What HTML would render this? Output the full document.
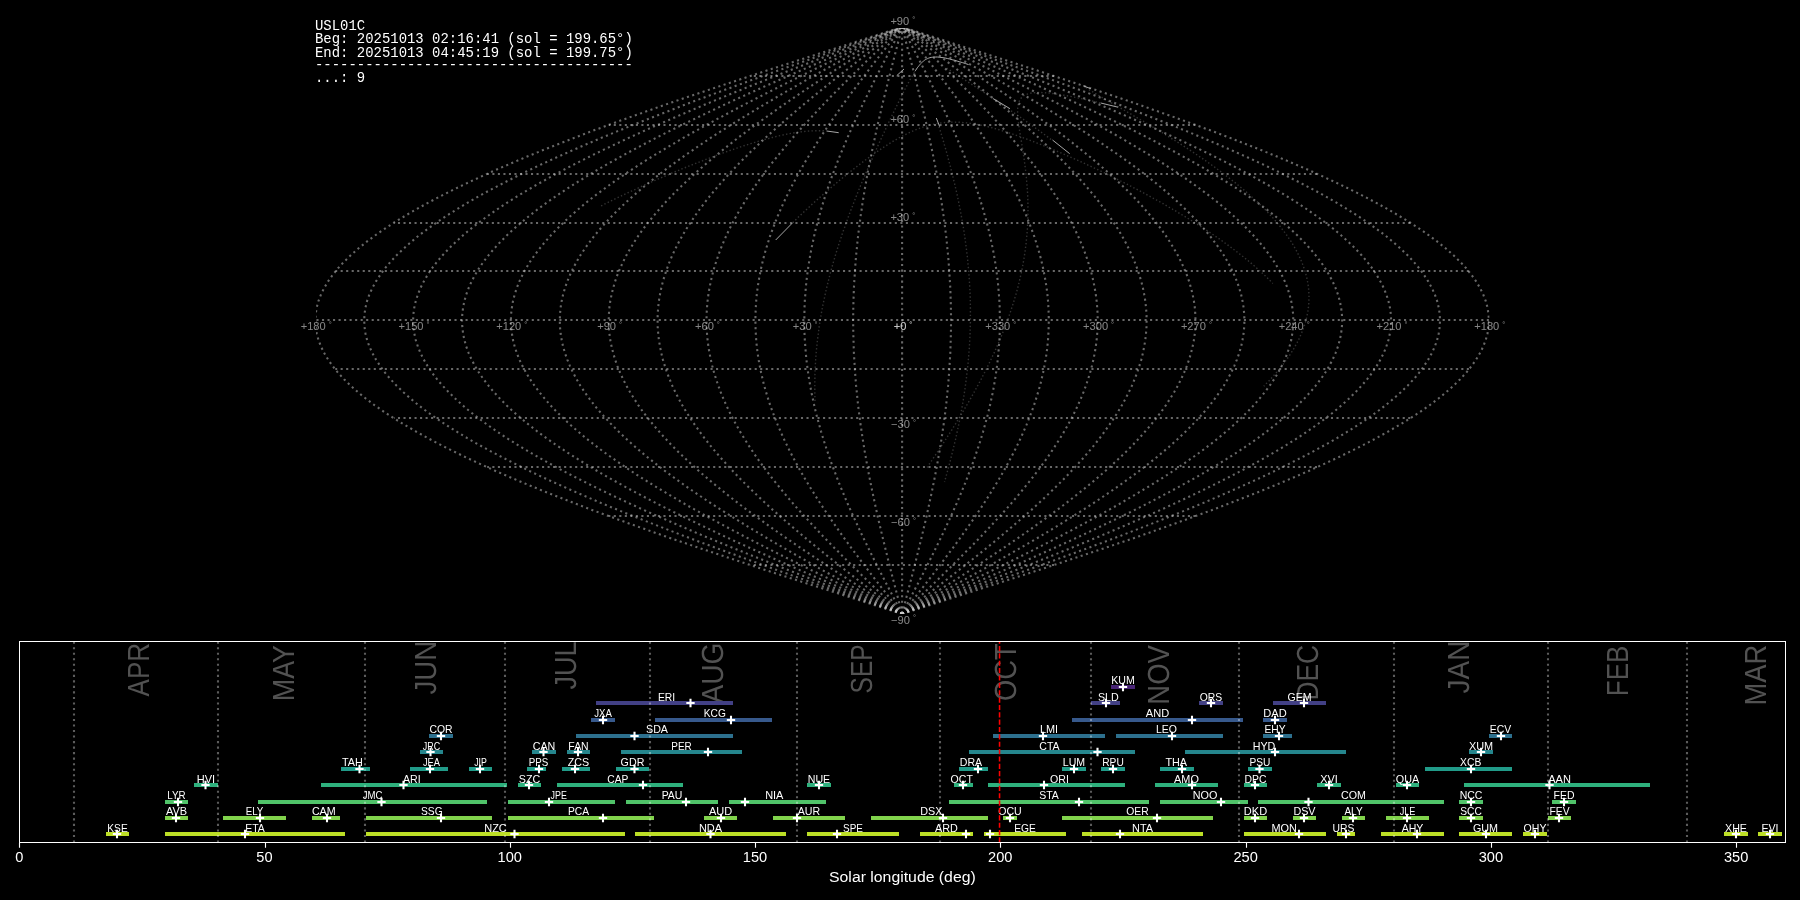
<!DOCTYPE html>
<html><head><meta charset="utf-8"><title>USL01C</title>
<style>html,body{margin:0;padding:0;background:#000;}body{width:1800px;height:900px;overflow:hidden;}svg{display:block;position:absolute;left:0;top:0;will-change:transform;}text{font-family:"Liberation Sans",sans-serif;}.mono{font-family:"Liberation Mono",monospace;}</style></head><body>
<svg width="1800" height="900" viewBox="0 0 1800 900">
<clipPath id="mapclip"><rect x="316" y="28" width="1173.5" height="586"/></clipPath>
<g fill="none" stroke="#cfcfcf" stroke-opacity="0.5" stroke-width="2.083" stroke-dasharray="2.083 3.4375" clip-path="url(#mapclip)">
<polyline points="902.1,613.9 922.6,607.4 943.0,600.9 963.4,594.3 983.8,587.8 1004.0,581.3 1024.1,574.8 1044.1,568.3 1063.8,561.7 1083.4,555.2 1102.8,548.7 1121.9,542.2 1140.8,535.7 1159.3,529.1 1177.6,522.6 1195.5,516.1 1213.1,509.6 1230.2,503.1 1247.0,496.5 1263.4,490.0 1279.3,483.5 1294.7,477.0 1309.7,470.5 1324.2,463.9 1338.2,457.4 1351.6,450.9 1364.5,444.4 1376.8,437.9 1388.6,431.3 1399.7,424.8 1410.3,418.3 1420.2,411.8 1429.5,405.3 1438.2,398.7 1446.2,392.2 1453.5,385.7 1460.2,379.2 1466.2,372.7 1471.5,366.1 1476.1,359.6 1480.0,353.1 1483.2,346.6 1485.7,340.1 1487.5,333.5 1488.5,327.0 1488.9,320.5 1488.5,314.0 1487.5,307.5 1485.7,300.9 1483.2,294.4 1480.0,287.9 1476.1,281.4 1471.5,274.9 1466.2,268.3 1460.2,261.8 1453.5,255.3 1446.2,248.8 1438.2,242.3 1429.5,235.7 1420.2,229.2 1410.3,222.7 1399.7,216.2 1388.6,209.7 1376.8,203.1 1364.5,196.6 1351.6,190.1 1338.2,183.6 1324.2,177.1 1309.7,170.5 1294.7,164.0 1279.3,157.5 1263.4,151.0 1247.0,144.5 1230.2,137.9 1213.1,131.4 1195.5,124.9 1177.6,118.4 1159.3,111.9 1140.8,105.3 1121.9,98.8 1102.8,92.3 1083.4,85.8 1063.8,79.3 1044.1,72.7 1024.1,66.2 1004.0,59.7 983.8,53.2 963.4,46.7 943.0,40.1 922.6,33.6 902.1,27.1"/>
<polyline points="902.1,613.9 920.9,607.4 939.6,600.9 958.3,594.3 977.0,587.8 995.5,581.3 1013.9,574.8 1032.2,568.3 1050.4,561.7 1068.3,555.2 1086.1,548.7 1103.6,542.2 1120.9,535.7 1137.9,529.1 1154.6,522.6 1171.1,516.1 1187.1,509.6 1202.9,503.1 1218.3,496.5 1233.3,490.0 1247.9,483.5 1262.0,477.0 1275.8,470.5 1289.0,463.9 1301.8,457.4 1314.2,450.9 1326.0,444.4 1337.3,437.9 1348.0,431.3 1358.3,424.8 1367.9,418.3 1377.0,411.8 1385.6,405.3 1393.5,398.7 1400.8,392.2 1407.6,385.7 1413.7,379.2 1419.2,372.7 1424.0,366.1 1428.2,359.6 1431.8,353.1 1434.8,346.6 1437.1,340.1 1438.7,333.5 1439.7,327.0 1440.0,320.5 1439.7,314.0 1438.7,307.5 1437.1,300.9 1434.8,294.4 1431.8,287.9 1428.2,281.4 1424.0,274.9 1419.2,268.3 1413.7,261.8 1407.6,255.3 1400.8,248.8 1393.5,242.3 1385.6,235.7 1377.0,229.2 1367.9,222.7 1358.3,216.2 1348.0,209.7 1337.3,203.1 1326.0,196.6 1314.2,190.1 1301.8,183.6 1289.0,177.1 1275.8,170.5 1262.0,164.0 1247.9,157.5 1233.3,151.0 1218.3,144.5 1202.9,137.9 1187.1,131.4 1171.1,124.9 1154.6,118.4 1137.9,111.9 1120.9,105.3 1103.6,98.8 1086.1,92.3 1068.3,85.8 1050.4,79.3 1032.2,72.7 1013.9,66.2 995.5,59.7 977.0,53.2 958.3,46.7 939.6,40.1 920.9,33.6 902.1,27.1"/>
<polyline points="902.1,613.9 919.2,607.4 936.2,600.9 953.2,594.3 970.2,587.8 987.0,581.3 1003.8,574.8 1020.4,568.3 1036.9,561.7 1053.2,555.2 1069.3,548.7 1085.3,542.2 1101.0,535.7 1116.5,529.1 1131.7,522.6 1146.6,516.1 1161.2,509.6 1175.5,503.1 1189.5,496.5 1203.2,490.0 1216.4,483.5 1229.3,477.0 1241.8,470.5 1253.9,463.9 1265.5,457.4 1276.7,450.9 1287.4,444.4 1297.7,437.9 1307.5,431.3 1316.8,424.8 1325.6,418.3 1333.9,411.8 1341.6,405.3 1348.8,398.7 1355.5,392.2 1361.6,385.7 1367.2,379.2 1372.2,372.7 1376.6,366.1 1380.4,359.6 1383.7,353.1 1386.3,346.6 1388.4,340.1 1389.9,333.5 1390.8,327.0 1391.1,320.5 1390.8,314.0 1389.9,307.5 1388.4,300.9 1386.3,294.4 1383.7,287.9 1380.4,281.4 1376.6,274.9 1372.2,268.3 1367.2,261.8 1361.6,255.3 1355.5,248.8 1348.8,242.3 1341.6,235.7 1333.9,229.2 1325.6,222.7 1316.8,216.2 1307.5,209.7 1297.7,203.1 1287.4,196.6 1276.7,190.1 1265.5,183.6 1253.9,177.1 1241.8,170.5 1229.3,164.0 1216.4,157.5 1203.2,151.0 1189.5,144.5 1175.5,137.9 1161.2,131.4 1146.6,124.9 1131.7,118.4 1116.5,111.9 1101.0,105.3 1085.3,98.8 1069.3,92.3 1053.2,85.8 1036.9,79.3 1020.4,72.7 1003.8,66.2 987.0,59.7 970.2,53.2 953.2,46.7 936.2,40.1 919.2,33.6 902.1,27.1"/>
<polyline points="902.1,613.9 917.5,607.4 932.8,600.9 948.1,594.3 963.4,587.8 978.5,581.3 993.6,574.8 1008.6,568.3 1023.4,561.7 1038.1,555.2 1052.6,548.7 1067.0,542.2 1081.1,535.7 1095.0,529.1 1108.7,522.6 1122.2,516.1 1135.3,509.6 1148.2,503.1 1160.8,496.5 1173.1,490.0 1185.0,483.5 1196.6,477.0 1207.8,470.5 1218.7,463.9 1229.2,457.4 1239.2,450.9 1248.9,444.4 1258.1,437.9 1267.0,431.3 1275.3,424.8 1283.2,418.3 1290.7,411.8 1297.7,405.3 1304.2,398.7 1310.2,392.2 1315.7,385.7 1320.7,379.2 1325.2,372.7 1329.1,366.1 1332.6,359.6 1335.5,353.1 1337.9,346.6 1339.8,340.1 1341.1,333.5 1341.9,327.0 1342.2,320.5 1341.9,314.0 1341.1,307.5 1339.8,300.9 1337.9,294.4 1335.5,287.9 1332.6,281.4 1329.1,274.9 1325.2,268.3 1320.7,261.8 1315.7,255.3 1310.2,248.8 1304.2,242.3 1297.7,235.7 1290.7,229.2 1283.2,222.7 1275.3,216.2 1267.0,209.7 1258.1,203.1 1248.9,196.6 1239.2,190.1 1229.2,183.6 1218.7,177.1 1207.8,170.5 1196.6,164.0 1185.0,157.5 1173.1,151.0 1160.8,144.5 1148.2,137.9 1135.3,131.4 1122.2,124.9 1108.7,118.4 1095.0,111.9 1081.1,105.3 1067.0,98.8 1052.6,92.3 1038.1,85.8 1023.4,79.3 1008.6,72.7 993.6,66.2 978.5,59.7 963.4,53.2 948.1,46.7 932.8,40.1 917.5,33.6 902.1,27.1"/>
<polyline points="902.1,613.9 915.8,607.4 929.4,600.9 943.0,594.3 956.5,587.8 970.0,581.3 983.4,574.8 996.7,568.3 1009.9,561.7 1023.0,555.2 1035.9,548.7 1048.6,542.2 1061.2,535.7 1073.6,529.1 1085.8,522.6 1097.7,516.1 1109.4,509.6 1120.9,503.1 1132.0,496.5 1142.9,490.0 1153.6,483.5 1163.9,477.0 1173.9,470.5 1183.5,463.9 1192.8,457.4 1201.8,450.9 1210.4,444.4 1218.6,437.9 1226.4,431.3 1233.9,424.8 1240.9,418.3 1247.5,411.8 1253.7,405.3 1259.5,398.7 1264.8,392.2 1269.7,385.7 1274.2,379.2 1278.1,372.7 1281.7,366.1 1284.8,359.6 1287.4,353.1 1289.5,346.6 1291.2,340.1 1292.3,333.5 1293.1,327.0 1293.3,320.5 1293.1,314.0 1292.3,307.5 1291.2,300.9 1289.5,294.4 1287.4,287.9 1284.8,281.4 1281.7,274.9 1278.1,268.3 1274.2,261.8 1269.7,255.3 1264.8,248.8 1259.5,242.3 1253.7,235.7 1247.5,229.2 1240.9,222.7 1233.9,216.2 1226.4,209.7 1218.6,203.1 1210.4,196.6 1201.8,190.1 1192.8,183.6 1183.5,177.1 1173.9,170.5 1163.9,164.0 1153.6,157.5 1142.9,151.0 1132.0,144.5 1120.9,137.9 1109.4,131.4 1097.7,124.9 1085.8,118.4 1073.6,111.9 1061.2,105.3 1048.6,98.8 1035.9,92.3 1023.0,85.8 1009.9,79.3 996.7,72.7 983.4,66.2 970.0,59.7 956.5,53.2 943.0,46.7 929.4,40.1 915.8,33.6 902.1,27.1"/>
<polyline points="902.1,613.9 914.0,607.4 926.0,600.9 937.9,594.3 949.7,587.8 961.5,581.3 973.3,574.8 984.9,568.3 996.5,561.7 1007.9,555.2 1019.2,548.7 1030.3,542.2 1041.3,535.7 1052.2,529.1 1062.8,522.6 1073.2,516.1 1083.5,509.6 1093.5,503.1 1103.3,496.5 1112.8,490.0 1122.1,483.5 1131.1,477.0 1139.9,470.5 1148.3,463.9 1156.5,457.4 1164.3,450.9 1171.8,444.4 1179.0,437.9 1185.9,431.3 1192.4,424.8 1198.5,418.3 1204.3,411.8 1209.8,405.3 1214.8,398.7 1219.5,392.2 1223.8,385.7 1227.6,379.2 1231.1,372.7 1234.2,366.1 1236.9,359.6 1239.2,353.1 1241.1,346.6 1242.5,340.1 1243.6,333.5 1244.2,327.0 1244.4,320.5 1244.2,314.0 1243.6,307.5 1242.5,300.9 1241.1,294.4 1239.2,287.9 1236.9,281.4 1234.2,274.9 1231.1,268.3 1227.6,261.8 1223.8,255.3 1219.5,248.8 1214.8,242.3 1209.8,235.7 1204.3,229.2 1198.5,222.7 1192.4,216.2 1185.9,209.7 1179.0,203.1 1171.8,196.6 1164.3,190.1 1156.5,183.6 1148.3,177.1 1139.9,170.5 1131.1,164.0 1122.1,157.5 1112.8,151.0 1103.3,144.5 1093.5,137.9 1083.5,131.4 1073.2,124.9 1062.8,118.4 1052.2,111.9 1041.3,105.3 1030.3,98.8 1019.2,92.3 1007.9,85.8 996.5,79.3 984.9,72.7 973.3,66.2 961.5,59.7 949.7,53.2 937.9,46.7 926.0,40.1 914.0,33.6 902.1,27.1"/>
<polyline points="902.1,613.9 912.3,607.4 922.6,600.9 932.8,594.3 942.9,587.8 953.0,581.3 963.1,574.8 973.1,568.3 983.0,561.7 992.8,555.2 1002.4,548.7 1012.0,542.2 1021.4,535.7 1030.7,529.1 1039.8,522.6 1048.8,516.1 1057.6,509.6 1066.2,503.1 1074.6,496.5 1082.7,490.0 1090.7,483.5 1098.4,477.0 1105.9,470.5 1113.2,463.9 1120.1,457.4 1126.9,450.9 1133.3,444.4 1139.5,437.9 1145.3,431.3 1150.9,424.8 1156.2,418.3 1161.2,411.8 1165.8,405.3 1170.1,398.7 1174.1,392.2 1177.8,385.7 1181.1,379.2 1184.1,372.7 1186.8,366.1 1189.1,359.6 1191.0,353.1 1192.6,346.6 1193.9,340.1 1194.8,333.5 1195.3,327.0 1195.5,320.5 1195.3,314.0 1194.8,307.5 1193.9,300.9 1192.6,294.4 1191.0,287.9 1189.1,281.4 1186.8,274.9 1184.1,268.3 1181.1,261.8 1177.8,255.3 1174.1,248.8 1170.1,242.3 1165.8,235.7 1161.2,229.2 1156.2,222.7 1150.9,216.2 1145.3,209.7 1139.5,203.1 1133.3,196.6 1126.9,190.1 1120.1,183.6 1113.2,177.1 1105.9,170.5 1098.4,164.0 1090.7,157.5 1082.7,151.0 1074.6,144.5 1066.2,137.9 1057.6,131.4 1048.8,124.9 1039.8,118.4 1030.7,111.9 1021.4,105.3 1012.0,98.8 1002.4,92.3 992.8,85.8 983.0,79.3 973.1,72.7 963.1,66.2 953.0,59.7 942.9,53.2 932.8,46.7 922.6,40.1 912.3,33.6 902.1,27.1"/>
<polyline points="902.1,613.9 910.6,607.4 919.2,600.9 927.7,594.3 936.1,587.8 944.6,581.3 952.9,574.8 961.2,568.3 969.5,561.7 977.7,555.2 985.7,548.7 993.7,542.2 1001.5,535.7 1009.3,529.1 1016.9,522.6 1024.4,516.1 1031.7,509.6 1038.8,503.1 1045.8,496.5 1052.6,490.0 1059.3,483.5 1065.7,477.0 1071.9,470.5 1078.0,463.9 1083.8,457.4 1089.4,450.9 1094.8,444.4 1099.9,437.9 1104.8,431.3 1109.4,424.8 1113.8,418.3 1118.0,411.8 1121.9,405.3 1125.5,398.7 1128.8,392.2 1131.9,385.7 1134.6,379.2 1137.1,372.7 1139.3,366.1 1141.3,359.6 1142.9,353.1 1144.2,346.6 1145.3,340.1 1146.0,333.5 1146.5,327.0 1146.6,320.5 1146.5,314.0 1146.0,307.5 1145.3,300.9 1144.2,294.4 1142.9,287.9 1141.3,281.4 1139.3,274.9 1137.1,268.3 1134.6,261.8 1131.9,255.3 1128.8,248.8 1125.5,242.3 1121.9,235.7 1118.0,229.2 1113.8,222.7 1109.4,216.2 1104.8,209.7 1099.9,203.1 1094.8,196.6 1089.4,190.1 1083.8,183.6 1078.0,177.1 1071.9,170.5 1065.7,164.0 1059.3,157.5 1052.6,151.0 1045.8,144.5 1038.8,137.9 1031.7,131.4 1024.4,124.9 1016.9,118.4 1009.3,111.9 1001.5,105.3 993.7,98.8 985.7,92.3 977.7,85.8 969.5,79.3 961.2,72.7 952.9,66.2 944.6,59.7 936.1,53.2 927.7,46.7 919.2,40.1 910.6,33.6 902.1,27.1"/>
<polyline points="902.1,613.9 908.9,607.4 915.7,600.9 922.5,594.3 929.3,587.8 936.1,581.3 942.8,574.8 949.4,568.3 956.0,561.7 962.5,555.2 969.0,548.7 975.4,542.2 981.7,535.7 987.8,529.1 993.9,522.6 999.9,516.1 1005.8,509.6 1011.5,503.1 1017.1,496.5 1022.5,490.0 1027.8,483.5 1033.0,477.0 1038.0,470.5 1042.8,463.9 1047.5,457.4 1051.9,450.9 1056.2,444.4 1060.3,437.9 1064.3,431.3 1068.0,424.8 1071.5,418.3 1074.8,411.8 1077.9,405.3 1080.8,398.7 1083.5,392.2 1085.9,385.7 1088.1,379.2 1090.1,372.7 1091.9,366.1 1093.4,359.6 1094.7,353.1 1095.8,346.6 1096.6,340.1 1097.2,333.5 1097.6,327.0 1097.7,320.5 1097.6,314.0 1097.2,307.5 1096.6,300.9 1095.8,294.4 1094.7,287.9 1093.4,281.4 1091.9,274.9 1090.1,268.3 1088.1,261.8 1085.9,255.3 1083.5,248.8 1080.8,242.3 1077.9,235.7 1074.8,229.2 1071.5,222.7 1068.0,216.2 1064.3,209.7 1060.3,203.1 1056.2,196.6 1051.9,190.1 1047.5,183.6 1042.8,177.1 1038.0,170.5 1033.0,164.0 1027.8,157.5 1022.5,151.0 1017.1,144.5 1011.5,137.9 1005.8,131.4 999.9,124.9 993.9,118.4 987.8,111.9 981.7,105.3 975.4,98.8 969.0,92.3 962.5,85.8 956.0,79.3 949.4,72.7 942.8,66.2 936.1,59.7 929.3,53.2 922.5,46.7 915.7,40.1 908.9,33.6 902.1,27.1"/>
<polyline points="902.1,613.9 907.2,607.4 912.3,600.9 917.4,594.3 922.5,587.8 927.6,581.3 932.6,574.8 937.6,568.3 942.5,561.7 947.4,555.2 952.3,548.7 957.1,542.2 961.8,535.7 966.4,529.1 971.0,522.6 975.5,516.1 979.8,509.6 984.1,503.1 988.3,496.5 992.4,490.0 996.4,483.5 1000.3,477.0 1004.0,470.5 1007.6,463.9 1011.1,457.4 1014.5,450.9 1017.7,444.4 1020.8,437.9 1023.7,431.3 1026.5,424.8 1029.1,418.3 1031.6,411.8 1034.0,405.3 1036.1,398.7 1038.1,392.2 1040.0,385.7 1041.6,379.2 1043.1,372.7 1044.4,366.1 1045.6,359.6 1046.6,353.1 1047.4,346.6 1048.0,340.1 1048.4,333.5 1048.7,327.0 1048.8,320.5 1048.7,314.0 1048.4,307.5 1048.0,300.9 1047.4,294.4 1046.6,287.9 1045.6,281.4 1044.4,274.9 1043.1,268.3 1041.6,261.8 1040.0,255.3 1038.1,248.8 1036.1,242.3 1034.0,235.7 1031.6,229.2 1029.1,222.7 1026.5,216.2 1023.7,209.7 1020.8,203.1 1017.7,196.6 1014.5,190.1 1011.1,183.6 1007.6,177.1 1004.0,170.5 1000.3,164.0 996.4,157.5 992.4,151.0 988.3,144.5 984.1,137.9 979.8,131.4 975.5,124.9 971.0,118.4 966.4,111.9 961.8,105.3 957.1,98.8 952.3,92.3 947.4,85.8 942.5,79.3 937.6,72.7 932.6,66.2 927.6,59.7 922.5,53.2 917.4,46.7 912.3,40.1 907.2,33.6 902.1,27.1"/>
<polyline points="902.1,613.9 905.5,607.4 908.9,600.9 912.3,594.3 915.7,587.8 919.1,581.3 922.4,574.8 925.8,568.3 929.1,561.7 932.3,555.2 935.5,548.7 938.7,542.2 941.9,535.7 945.0,529.1 948.0,522.6 951.0,516.1 953.9,509.6 956.8,503.1 959.6,496.5 962.3,490.0 965.0,483.5 967.5,477.0 970.0,470.5 972.5,463.9 974.8,457.4 977.0,450.9 979.2,444.4 981.2,437.9 983.2,431.3 985.0,424.8 986.8,418.3 988.5,411.8 990.0,405.3 991.4,398.7 992.8,392.2 994.0,385.7 995.1,379.2 996.1,372.7 997.0,366.1 997.8,359.6 998.4,353.1 998.9,346.6 999.4,340.1 999.7,333.5 999.8,327.0 999.9,320.5 999.8,314.0 999.7,307.5 999.4,300.9 998.9,294.4 998.4,287.9 997.8,281.4 997.0,274.9 996.1,268.3 995.1,261.8 994.0,255.3 992.8,248.8 991.4,242.3 990.0,235.7 988.5,229.2 986.8,222.7 985.0,216.2 983.2,209.7 981.2,203.1 979.2,196.6 977.0,190.1 974.8,183.6 972.5,177.1 970.0,170.5 967.5,164.0 965.0,157.5 962.3,151.0 959.6,144.5 956.8,137.9 953.9,131.4 951.0,124.9 948.0,118.4 945.0,111.9 941.9,105.3 938.7,98.8 935.5,92.3 932.3,85.8 929.1,79.3 925.8,72.7 922.4,66.2 919.1,59.7 915.7,53.2 912.3,46.7 908.9,40.1 905.5,33.6 902.1,27.1"/>
<polyline points="902.1,613.9 903.8,607.4 905.5,600.9 907.2,594.3 908.9,587.8 910.6,581.3 912.3,574.8 913.9,568.3 915.6,561.7 917.2,555.2 918.8,548.7 920.4,542.2 922.0,535.7 923.5,529.1 925.1,522.6 926.6,516.1 928.0,509.6 929.4,503.1 930.8,496.5 932.2,490.0 933.5,483.5 934.8,477.0 936.1,470.5 937.3,463.9 938.4,457.4 939.6,450.9 940.6,444.4 941.7,437.9 942.6,431.3 943.6,424.8 944.4,418.3 945.3,411.8 946.1,405.3 946.8,398.7 947.4,392.2 948.1,385.7 948.6,379.2 949.1,372.7 949.5,366.1 949.9,359.6 950.3,353.1 950.5,346.6 950.7,340.1 950.9,333.5 951.0,327.0 951.0,320.5 951.0,314.0 950.9,307.5 950.7,300.9 950.5,294.4 950.3,287.9 949.9,281.4 949.5,274.9 949.1,268.3 948.6,261.8 948.1,255.3 947.4,248.8 946.8,242.3 946.1,235.7 945.3,229.2 944.4,222.7 943.6,216.2 942.6,209.7 941.7,203.1 940.6,196.6 939.6,190.1 938.4,183.6 937.3,177.1 936.1,170.5 934.8,164.0 933.5,157.5 932.2,151.0 930.8,144.5 929.4,137.9 928.0,131.4 926.6,124.9 925.1,118.4 923.5,111.9 922.0,105.3 920.4,98.8 918.8,92.3 917.2,85.8 915.6,79.3 913.9,72.7 912.3,66.2 910.6,59.7 908.9,53.2 907.2,46.7 905.5,40.1 903.8,33.6 902.1,27.1"/>
<polyline points="902.1,613.9 902.1,607.4 902.1,600.9 902.1,594.3 902.1,587.8 902.1,581.3 902.1,574.8 902.1,568.3 902.1,561.7 902.1,555.2 902.1,548.7 902.1,542.2 902.1,535.7 902.1,529.1 902.1,522.6 902.1,516.1 902.1,509.6 902.1,503.1 902.1,496.5 902.1,490.0 902.1,483.5 902.1,477.0 902.1,470.5 902.1,463.9 902.1,457.4 902.1,450.9 902.1,444.4 902.1,437.9 902.1,431.3 902.1,424.8 902.1,418.3 902.1,411.8 902.1,405.3 902.1,398.7 902.1,392.2 902.1,385.7 902.1,379.2 902.1,372.7 902.1,366.1 902.1,359.6 902.1,353.1 902.1,346.6 902.1,340.1 902.1,333.5 902.1,327.0 902.1,320.5 902.1,314.0 902.1,307.5 902.1,300.9 902.1,294.4 902.1,287.9 902.1,281.4 902.1,274.9 902.1,268.3 902.1,261.8 902.1,255.3 902.1,248.8 902.1,242.3 902.1,235.7 902.1,229.2 902.1,222.7 902.1,216.2 902.1,209.7 902.1,203.1 902.1,196.6 902.1,190.1 902.1,183.6 902.1,177.1 902.1,170.5 902.1,164.0 902.1,157.5 902.1,151.0 902.1,144.5 902.1,137.9 902.1,131.4 902.1,124.9 902.1,118.4 902.1,111.9 902.1,105.3 902.1,98.8 902.1,92.3 902.1,85.8 902.1,79.3 902.1,72.7 902.1,66.2 902.1,59.7 902.1,53.2 902.1,46.7 902.1,40.1 902.1,33.6 902.1,27.1"/>
<polyline points="902.1,613.9 900.4,607.4 898.7,600.9 897.0,594.3 895.3,587.8 893.6,581.3 891.9,574.8 890.3,568.3 888.6,561.7 887.0,555.2 885.4,548.7 883.8,542.2 882.2,535.7 880.7,529.1 879.1,522.6 877.6,516.1 876.2,509.6 874.8,503.1 873.4,496.5 872.0,490.0 870.7,483.5 869.4,477.0 868.1,470.5 866.9,463.9 865.8,457.4 864.6,450.9 863.6,444.4 862.5,437.9 861.6,431.3 860.6,424.8 859.8,418.3 858.9,411.8 858.1,405.3 857.4,398.7 856.8,392.2 856.1,385.7 855.6,379.2 855.1,372.7 854.7,366.1 854.3,359.6 853.9,353.1 853.7,346.6 853.5,340.1 853.3,333.5 853.2,327.0 853.2,320.5 853.2,314.0 853.3,307.5 853.5,300.9 853.7,294.4 853.9,287.9 854.3,281.4 854.7,274.9 855.1,268.3 855.6,261.8 856.1,255.3 856.8,248.8 857.4,242.3 858.1,235.7 858.9,229.2 859.8,222.7 860.6,216.2 861.6,209.7 862.5,203.1 863.6,196.6 864.6,190.1 865.8,183.6 866.9,177.1 868.1,170.5 869.4,164.0 870.7,157.5 872.0,151.0 873.4,144.5 874.8,137.9 876.2,131.4 877.6,124.9 879.1,118.4 880.7,111.9 882.2,105.3 883.8,98.8 885.4,92.3 887.0,85.8 888.6,79.3 890.3,72.7 891.9,66.2 893.6,59.7 895.3,53.2 897.0,46.7 898.7,40.1 900.4,33.6 902.1,27.1"/>
<polyline points="902.1,613.9 898.7,607.4 895.3,600.9 891.9,594.3 888.5,587.8 885.1,581.3 881.8,574.8 878.4,568.3 875.1,561.7 871.9,555.2 868.7,548.7 865.5,542.2 862.3,535.7 859.2,529.1 856.2,522.6 853.2,516.1 850.3,509.6 847.4,503.1 844.6,496.5 841.9,490.0 839.2,483.5 836.7,477.0 834.2,470.5 831.7,463.9 829.4,457.4 827.2,450.9 825.0,444.4 823.0,437.9 821.0,431.3 819.2,424.8 817.4,418.3 815.7,411.8 814.2,405.3 812.8,398.7 811.4,392.2 810.2,385.7 809.1,379.2 808.1,372.7 807.2,366.1 806.4,359.6 805.8,353.1 805.3,346.6 804.8,340.1 804.5,333.5 804.4,327.0 804.3,320.5 804.4,314.0 804.5,307.5 804.8,300.9 805.3,294.4 805.8,287.9 806.4,281.4 807.2,274.9 808.1,268.3 809.1,261.8 810.2,255.3 811.4,248.8 812.8,242.3 814.2,235.7 815.7,229.2 817.4,222.7 819.2,216.2 821.0,209.7 823.0,203.1 825.0,196.6 827.2,190.1 829.4,183.6 831.7,177.1 834.2,170.5 836.7,164.0 839.2,157.5 841.9,151.0 844.6,144.5 847.4,137.9 850.3,131.4 853.2,124.9 856.2,118.4 859.2,111.9 862.3,105.3 865.5,98.8 868.7,92.3 871.9,85.8 875.1,79.3 878.4,72.7 881.8,66.2 885.1,59.7 888.5,53.2 891.9,46.7 895.3,40.1 898.7,33.6 902.1,27.1"/>
<polyline points="902.1,613.9 897.0,607.4 891.9,600.9 886.8,594.3 881.7,587.8 876.6,581.3 871.6,574.8 866.6,568.3 861.7,561.7 856.8,555.2 851.9,548.7 847.1,542.2 842.4,535.7 837.8,529.1 833.2,522.6 828.8,516.1 824.4,509.6 820.1,503.1 815.9,496.5 811.8,490.0 807.8,483.5 803.9,477.0 800.2,470.5 796.6,463.9 793.1,457.4 789.7,450.9 786.5,444.4 783.4,437.9 780.5,431.3 777.7,424.8 775.1,418.3 772.6,411.8 770.2,405.3 768.1,398.7 766.1,392.2 764.2,385.7 762.6,379.2 761.1,372.7 759.8,366.1 758.6,359.6 757.6,353.1 756.8,346.6 756.2,340.1 755.8,333.5 755.5,327.0 755.4,320.5 755.5,314.0 755.8,307.5 756.2,300.9 756.8,294.4 757.6,287.9 758.6,281.4 759.8,274.9 761.1,268.3 762.6,261.8 764.2,255.3 766.1,248.8 768.1,242.3 770.2,235.7 772.6,229.2 775.1,222.7 777.7,216.2 780.5,209.7 783.4,203.1 786.5,196.6 789.7,190.1 793.1,183.6 796.6,177.1 800.2,170.5 803.9,164.0 807.8,157.5 811.8,151.0 815.9,144.5 820.1,137.9 824.4,131.4 828.8,124.9 833.2,118.4 837.8,111.9 842.4,105.3 847.1,98.8 851.9,92.3 856.8,85.8 861.7,79.3 866.6,72.7 871.6,66.2 876.6,59.7 881.7,53.2 886.8,46.7 891.9,40.1 897.0,33.6 902.1,27.1"/>
<polyline points="902.1,613.9 895.3,607.4 888.5,600.9 881.7,594.3 874.9,587.8 868.1,581.3 861.4,574.8 854.8,568.3 848.2,561.7 841.7,555.2 835.2,548.7 828.8,542.2 822.5,535.7 816.4,529.1 810.3,522.6 804.3,516.1 798.4,509.6 792.7,503.1 787.1,496.5 781.7,490.0 776.4,483.5 771.2,477.0 766.2,470.5 761.4,463.9 756.7,457.4 752.3,450.9 748.0,444.4 743.9,437.9 739.9,431.3 736.2,424.8 732.7,418.3 729.4,411.8 726.3,405.3 723.4,398.7 720.7,392.2 718.3,385.7 716.1,379.2 714.1,372.7 712.3,366.1 710.8,359.6 709.5,353.1 708.4,346.6 707.6,340.1 707.0,333.5 706.6,327.0 706.5,320.5 706.6,314.0 707.0,307.5 707.6,300.9 708.4,294.4 709.5,287.9 710.8,281.4 712.3,274.9 714.1,268.3 716.1,261.8 718.3,255.3 720.7,248.8 723.4,242.3 726.3,235.7 729.4,229.2 732.7,222.7 736.2,216.2 739.9,209.7 743.9,203.1 748.0,196.6 752.3,190.1 756.7,183.6 761.4,177.1 766.2,170.5 771.2,164.0 776.4,157.5 781.7,151.0 787.1,144.5 792.7,137.9 798.4,131.4 804.3,124.9 810.3,118.4 816.4,111.9 822.5,105.3 828.8,98.8 835.2,92.3 841.7,85.8 848.2,79.3 854.8,72.7 861.4,66.2 868.1,59.7 874.9,53.2 881.7,46.7 888.5,40.1 895.3,33.6 902.1,27.1"/>
<polyline points="902.1,613.9 893.6,607.4 885.0,600.9 876.5,594.3 868.1,587.8 859.6,581.3 851.3,574.8 843.0,568.3 834.7,561.7 826.5,555.2 818.5,548.7 810.5,542.2 802.7,535.7 794.9,529.1 787.3,522.6 779.9,516.1 772.5,509.6 765.4,503.1 758.4,496.5 751.6,490.0 744.9,483.5 738.5,477.0 732.3,470.5 726.2,463.9 720.4,457.4 714.8,450.9 709.4,444.4 704.3,437.9 699.4,431.3 694.8,424.8 690.4,418.3 686.2,411.8 682.3,405.3 678.7,398.7 675.4,392.2 672.3,385.7 669.6,379.2 667.1,372.7 664.9,366.1 662.9,359.6 661.3,353.1 660.0,346.6 658.9,340.1 658.2,333.5 657.7,327.0 657.6,320.5 657.7,314.0 658.2,307.5 658.9,300.9 660.0,294.4 661.3,287.9 662.9,281.4 664.9,274.9 667.1,268.3 669.6,261.8 672.3,255.3 675.4,248.8 678.7,242.3 682.3,235.7 686.2,229.2 690.4,222.7 694.8,216.2 699.4,209.7 704.3,203.1 709.4,196.6 714.8,190.1 720.4,183.6 726.2,177.1 732.3,170.5 738.5,164.0 744.9,157.5 751.6,151.0 758.4,144.5 765.4,137.9 772.5,131.4 779.9,124.9 787.3,118.4 794.9,111.9 802.7,105.3 810.5,98.8 818.5,92.3 826.5,85.8 834.7,79.3 843.0,72.7 851.3,66.2 859.6,59.7 868.1,53.2 876.5,46.7 885.0,40.1 893.6,33.6 902.1,27.1"/>
<polyline points="902.1,613.9 891.9,607.4 881.6,600.9 871.4,594.3 861.3,587.8 851.2,581.3 841.1,574.8 831.1,568.3 821.2,561.7 811.4,555.2 801.8,548.7 792.2,542.2 782.8,535.7 773.5,529.1 764.4,522.6 755.4,516.1 746.6,509.6 738.0,503.1 729.6,496.5 721.5,490.0 713.5,483.5 705.8,477.0 698.3,470.5 691.0,463.9 684.1,457.4 677.3,450.9 670.9,444.4 664.7,437.9 658.9,431.3 653.3,424.8 648.0,418.3 643.0,411.8 638.4,405.3 634.1,398.7 630.1,392.2 626.4,385.7 623.1,379.2 620.1,372.7 617.4,366.1 615.1,359.6 613.2,353.1 611.6,346.6 610.3,340.1 609.4,333.5 608.9,327.0 608.7,320.5 608.9,314.0 609.4,307.5 610.3,300.9 611.6,294.4 613.2,287.9 615.1,281.4 617.4,274.9 620.1,268.3 623.1,261.8 626.4,255.3 630.1,248.8 634.1,242.3 638.4,235.7 643.0,229.2 648.0,222.7 653.3,216.2 658.9,209.7 664.7,203.1 670.9,196.6 677.3,190.1 684.1,183.6 691.0,177.1 698.3,170.5 705.8,164.0 713.5,157.5 721.5,151.0 729.6,144.5 738.0,137.9 746.6,131.4 755.4,124.9 764.4,118.4 773.5,111.9 782.8,105.3 792.2,98.8 801.8,92.3 811.4,85.8 821.2,79.3 831.1,72.7 841.1,66.2 851.2,59.7 861.3,53.2 871.4,46.7 881.6,40.1 891.9,33.6 902.1,27.1"/>
<polyline points="902.1,613.9 890.2,607.4 878.2,600.9 866.3,594.3 854.5,587.8 842.7,581.3 830.9,574.8 819.3,568.3 807.7,561.7 796.3,555.2 785.0,548.7 773.9,542.2 762.9,535.7 752.0,529.1 741.4,522.6 731.0,516.1 720.7,509.6 710.7,503.1 700.9,496.5 691.4,490.0 682.1,483.5 673.1,477.0 664.3,470.5 655.9,463.9 647.7,457.4 639.9,450.9 632.4,444.4 625.2,437.9 618.3,431.3 611.8,424.8 605.7,418.3 599.9,411.8 594.4,405.3 589.4,398.7 584.7,392.2 580.4,385.7 576.6,379.2 573.1,372.7 570.0,366.1 567.3,359.6 565.0,353.1 563.1,346.6 561.7,340.1 560.6,333.5 560.0,327.0 559.8,320.5 560.0,314.0 560.6,307.5 561.7,300.9 563.1,294.4 565.0,287.9 567.3,281.4 570.0,274.9 573.1,268.3 576.6,261.8 580.4,255.3 584.7,248.8 589.4,242.3 594.4,235.7 599.9,229.2 605.7,222.7 611.8,216.2 618.3,209.7 625.2,203.1 632.4,196.6 639.9,190.1 647.7,183.6 655.9,177.1 664.3,170.5 673.1,164.0 682.1,157.5 691.4,151.0 700.9,144.5 710.7,137.9 720.7,131.4 731.0,124.9 741.4,118.4 752.0,111.9 762.9,105.3 773.9,98.8 785.0,92.3 796.3,85.8 807.7,79.3 819.3,72.7 830.9,66.2 842.7,59.7 854.5,53.2 866.3,46.7 878.2,40.1 890.2,33.6 902.1,27.1"/>
<polyline points="902.1,613.9 888.4,607.4 874.8,600.9 861.2,594.3 847.7,587.8 834.2,581.3 820.8,574.8 807.5,568.3 794.3,561.7 781.2,555.2 768.3,548.7 755.6,542.2 743.0,535.7 730.6,529.1 718.4,522.6 706.5,516.1 694.8,509.6 683.3,503.1 672.2,496.5 661.3,490.0 650.6,483.5 640.3,477.0 630.3,470.5 620.7,463.9 611.4,457.4 602.4,450.9 593.8,444.4 585.6,437.9 577.8,431.3 570.3,424.8 563.3,418.3 556.7,411.8 550.5,405.3 544.7,398.7 539.4,392.2 534.5,385.7 530.0,379.2 526.1,372.7 522.5,366.1 519.4,359.6 516.8,353.1 514.7,346.6 513.0,340.1 511.9,333.5 511.1,327.0 510.9,320.5 511.1,314.0 511.9,307.5 513.0,300.9 514.7,294.4 516.8,287.9 519.4,281.4 522.5,274.9 526.1,268.3 530.0,261.8 534.5,255.3 539.4,248.8 544.7,242.3 550.5,235.7 556.7,229.2 563.3,222.7 570.3,216.2 577.8,209.7 585.6,203.1 593.8,196.6 602.4,190.1 611.4,183.6 620.7,177.1 630.3,170.5 640.3,164.0 650.6,157.5 661.3,151.0 672.2,144.5 683.3,137.9 694.8,131.4 706.5,124.9 718.4,118.4 730.6,111.9 743.0,105.3 755.6,98.8 768.3,92.3 781.2,85.8 794.3,79.3 807.5,72.7 820.8,66.2 834.2,59.7 847.7,53.2 861.2,46.7 874.8,40.1 888.4,33.6 902.1,27.1"/>
<polyline points="902.1,613.9 886.7,607.4 871.4,600.9 856.1,594.3 840.8,587.8 825.7,581.3 810.6,574.8 795.6,568.3 780.8,561.7 766.1,555.2 751.6,548.7 737.2,542.2 723.1,535.7 709.2,529.1 695.5,522.6 682.0,516.1 668.9,509.6 656.0,503.1 643.4,496.5 631.1,490.0 619.2,483.5 607.6,477.0 596.4,470.5 585.5,463.9 575.0,457.4 565.0,450.9 555.3,444.4 546.1,437.9 537.2,431.3 528.9,424.8 521.0,418.3 513.5,411.8 506.5,405.3 500.0,398.7 494.0,392.2 488.5,385.7 483.5,379.2 479.0,372.7 475.1,366.1 471.6,359.6 468.7,353.1 466.3,346.6 464.4,340.1 463.1,333.5 462.3,327.0 462.0,320.5 462.3,314.0 463.1,307.5 464.4,300.9 466.3,294.4 468.7,287.9 471.6,281.4 475.1,274.9 479.0,268.3 483.5,261.8 488.5,255.3 494.0,248.8 500.0,242.3 506.5,235.7 513.5,229.2 521.0,222.7 528.9,216.2 537.2,209.7 546.1,203.1 555.3,196.6 565.0,190.1 575.0,183.6 585.5,177.1 596.4,170.5 607.6,164.0 619.2,157.5 631.1,151.0 643.4,144.5 656.0,137.9 668.9,131.4 682.0,124.9 695.5,118.4 709.2,111.9 723.1,105.3 737.2,98.8 751.6,92.3 766.1,85.8 780.8,79.3 795.6,72.7 810.6,66.2 825.7,59.7 840.8,53.2 856.1,46.7 871.4,40.1 886.7,33.6 902.1,27.1"/>
<polyline points="902.1,613.9 885.0,607.4 868.0,600.9 851.0,594.3 834.0,587.8 817.2,581.3 800.4,574.8 783.8,568.3 767.3,561.7 751.0,555.2 734.9,548.7 718.9,542.2 703.2,535.7 687.7,529.1 672.5,522.6 657.6,516.1 643.0,509.6 628.7,503.1 614.7,496.5 601.0,490.0 587.8,483.5 574.9,477.0 562.4,470.5 550.3,463.9 538.7,457.4 527.5,450.9 516.8,444.4 506.5,437.9 496.7,431.3 487.4,424.8 478.6,418.3 470.3,411.8 462.6,405.3 455.4,398.7 448.7,392.2 442.6,385.7 437.0,379.2 432.0,372.7 427.6,366.1 423.8,359.6 420.5,353.1 417.9,346.6 415.8,340.1 414.3,333.5 413.4,327.0 413.1,320.5 413.4,314.0 414.3,307.5 415.8,300.9 417.9,294.4 420.5,287.9 423.8,281.4 427.6,274.9 432.0,268.3 437.0,261.8 442.6,255.3 448.7,248.8 455.4,242.3 462.6,235.7 470.3,229.2 478.6,222.7 487.4,216.2 496.7,209.7 506.5,203.1 516.8,196.6 527.5,190.1 538.7,183.6 550.3,177.1 562.4,170.5 574.9,164.0 587.8,157.5 601.0,151.0 614.7,144.5 628.7,137.9 643.0,131.4 657.6,124.9 672.5,118.4 687.7,111.9 703.2,105.3 718.9,98.8 734.9,92.3 751.0,85.8 767.3,79.3 783.8,72.7 800.4,66.2 817.2,59.7 834.0,53.2 851.0,46.7 868.0,40.1 885.0,33.6 902.1,27.1"/>
<polyline points="902.1,613.9 883.3,607.4 864.6,600.9 845.9,594.3 827.2,587.8 808.7,581.3 790.3,574.8 772.0,568.3 753.8,561.7 735.9,555.2 718.1,548.7 700.6,542.2 683.3,535.7 666.3,529.1 649.6,522.6 633.1,516.1 617.1,509.6 601.3,503.1 585.9,496.5 570.9,490.0 556.3,483.5 542.2,477.0 528.4,470.5 515.2,463.9 502.4,457.4 490.0,450.9 478.2,444.4 466.9,437.9 456.2,431.3 445.9,424.8 436.3,418.3 427.2,411.8 418.6,405.3 410.7,398.7 403.4,392.2 396.6,385.7 390.5,379.2 385.0,372.7 380.2,366.1 376.0,359.6 372.4,353.1 369.4,346.6 367.1,340.1 365.5,333.5 364.5,327.0 364.2,320.5 364.5,314.0 365.5,307.5 367.1,300.9 369.4,294.4 372.4,287.9 376.0,281.4 380.2,274.9 385.0,268.3 390.5,261.8 396.6,255.3 403.4,248.8 410.7,242.3 418.6,235.7 427.2,229.2 436.3,222.7 445.9,216.2 456.2,209.7 466.9,203.1 478.2,196.6 490.0,190.1 502.4,183.6 515.2,177.1 528.4,170.5 542.2,164.0 556.3,157.5 570.9,151.0 585.9,144.5 601.3,137.9 617.1,131.4 633.1,124.9 649.6,118.4 666.3,111.9 683.3,105.3 700.6,98.8 718.1,92.3 735.9,85.8 753.8,79.3 772.0,72.7 790.3,66.2 808.7,59.7 827.2,53.2 845.9,46.7 864.6,40.1 883.3,33.6 902.1,27.1"/>
<polyline points="902.1,613.9 881.6,607.4 861.2,600.9 840.8,594.3 820.4,587.8 800.2,581.3 780.1,574.8 760.1,568.3 740.4,561.7 720.8,555.2 701.4,548.7 682.3,542.2 663.4,535.7 644.9,529.1 626.6,522.6 608.7,516.1 591.1,509.6 574.0,503.1 557.2,496.5 540.8,490.0 524.9,483.5 509.5,477.0 494.5,470.5 480.0,463.9 466.0,457.4 452.6,450.9 439.7,444.4 427.4,437.9 415.6,431.3 404.5,424.8 393.9,418.3 384.0,411.8 374.7,405.3 366.0,398.7 358.0,392.2 350.7,385.7 344.0,379.2 338.0,372.7 332.7,366.1 328.1,359.6 324.2,353.1 321.0,346.6 318.5,340.1 316.7,333.5 315.7,327.0 315.3,320.5 315.7,314.0 316.7,307.5 318.5,300.9 321.0,294.4 324.2,287.9 328.1,281.4 332.7,274.9 338.0,268.3 344.0,261.8 350.7,255.3 358.0,248.8 366.0,242.3 374.7,235.7 384.0,229.2 393.9,222.7 404.5,216.2 415.6,209.7 427.4,203.1 439.7,196.6 452.6,190.1 466.0,183.6 480.0,177.1 494.5,170.5 509.5,164.0 524.9,157.5 540.8,151.0 557.2,144.5 574.0,137.9 591.1,131.4 608.7,124.9 626.6,118.4 644.9,111.9 663.4,105.3 682.3,98.8 701.4,92.3 720.8,85.8 740.4,79.3 760.1,72.7 780.1,66.2 800.2,59.7 820.4,53.2 840.8,46.7 861.2,40.1 881.6,33.6 902.1,27.1"/>
<line x1="1054.0" y1="565.0" x2="750.2" y2="565.0"/>
<line x1="1195.5" y1="516.0" x2="608.7" y2="516.0"/>
<line x1="1317.0" y1="467.0" x2="487.2" y2="467.0"/>
<line x1="1410.3" y1="418.0" x2="393.9" y2="418.0"/>
<line x1="1468.9" y1="369.0" x2="335.3" y2="369.0"/>
<line x1="1488.9" y1="320.0" x2="315.3" y2="320.0"/>
<line x1="1468.9" y1="271.0" x2="335.3" y2="271.0"/>
<line x1="1410.3" y1="223.0" x2="393.9" y2="223.0"/>
<line x1="1317.0" y1="174.0" x2="487.2" y2="174.0"/>
<line x1="1195.5" y1="125.0" x2="608.7" y2="125.0"/>
<line x1="1054.0" y1="76.0" x2="750.2" y2="76.0"/>
</g>
<g fill="none" stroke="#fff" stroke-opacity="0.2" stroke-width="1.39" stroke-dasharray="1.39 2.29">
<polyline points="792.7,222.7 795.5,220.0 798.2,217.3 801.0,214.7 803.8,212.0 806.6,209.4 809.5,206.7 812.3,204.1 815.2,201.5 818.1,198.9 821.0,196.4 823.8,193.8 826.7,191.3 829.7,188.8 832.6,186.3 835.5,183.8 838.4,181.3 841.4,178.9 844.3,176.5 847.2,174.1 850.2,171.8 853.1,169.4 856.0,167.2 859.0,164.9 861.9,162.7 864.8,160.5 867.7,158.3 870.7,156.2 873.6,154.1 876.5,152.1 879.4,150.1 882.3,148.1 885.2,146.2 888.1,144.4 891.0,142.6 893.9,140.8 896.8,139.2 899.6,137.5 902.5,136.0 905.4,134.5 908.3,133.1 911.2,131.8 914.1,130.5 917.0,129.3 919.9,128.2 922.8,127.2 925.7,126.3 928.7,125.4 931.7,124.7 934.7,124.0 937.7,123.4 940.8,123.0 943.9,122.6 947.0,122.4 950.2,122.2 953.4,122.1 956.7,122.2 960.0,122.3 963.4,122.6 966.9,122.9 970.4,123.4 974.0,123.9 977.6,124.6 981.3,125.3 985.1,126.1 988.9,127.0 992.8,128.0 996.8,129.1 1000.8,130.3 1004.9,131.6 1009.1,132.9 1013.3,134.3 1017.6,135.8 1021.9,137.3 1026.3,138.9 1030.7,140.6 1035.2,142.3 1039.8,144.1 1044.3,145.9 1049.0,147.8 1053.6,149.8 1058.3,151.8 1063.0,153.8 1067.7,155.9 1072.5,158.0 1077.3,160.1 1082.1,162.3 1086.9,164.6 1091.7,166.8 1096.5,169.1 1101.4,171.4 1106.2,173.8 1111.0,176.2 1115.8,178.6 1120.7,181.0 1125.5,183.4 1130.2,185.9 1135.0,188.4 1139.8,190.9 1144.5,193.4 1149.2,196.0 1153.8,198.6 1158.5,201.1 1163.1,203.7 1167.6,206.4 1172.2,209.0 1176.7,211.6 1181.1,214.3 1185.5,216.9 1189.9,219.6 1194.2,222.3 1198.4,225.0 1202.6,227.7 1206.8,230.4 1210.9,233.2 1214.9,235.9 1218.9,238.6 1222.8,241.4 1226.6,244.2 1230.4,246.9 1234.1,249.7 1237.7,252.5 1241.3,255.3 1244.8,258.0 1248.2,260.8 1251.6,263.6 1254.9,266.4 1258.1,269.3 1261.2,272.1 1264.2,274.9 1267.2,277.7 1270.0,280.5 1272.8,283.4"/>
<polyline points="601.1,205.9 606.0,203.4 611.0,200.9 616.0,198.5 621.1,196.0 626.1,193.6 631.2,191.2 636.3,188.9 641.4,186.5 646.5,184.2 651.7,181.9 656.8,179.6 661.9,177.4 667.1,175.2 672.2,173.0 677.3,170.9 682.4,168.7 687.5,166.7 692.6,164.6 697.6,162.6 702.7,160.7 707.6,158.7 712.6,156.9 717.5,155.0 722.4,153.2 727.2,151.5 732.0,149.8 736.8,148.2 741.4,146.6 746.1,145.1 750.6,143.7 755.1,142.3 759.5,141.0 763.9,139.7 768.2,138.6 772.4,137.5 776.6,136.4 780.6,135.5 784.6,134.6 788.5,133.8 792.4,133.1 796.1,132.5 799.8,132.0 803.4,131.5 807.0,131.2 810.4,130.9 813.8,130.8 817.1,130.7 820.4,130.7 823.6,130.8 826.7,131.0"/>
<polyline points="815.0,401.0 814.9,397.8 814.9,394.6 814.8,391.4 814.8,388.1 814.8,384.9 814.8,381.7 814.9,378.5 814.9,375.3 815.0,372.1 815.2,368.9 815.3,365.6 815.5,362.4 815.7,359.2 815.9,356.0 816.2,352.8 816.5,349.6 816.8,346.3 817.1,343.1 817.5,339.9 817.9,336.7 818.3,333.5 818.7,330.3 819.1,327.0 819.6,323.8 820.1,320.6 820.7,317.4 821.2,314.2 821.8,310.9 822.4,307.7 823.0,304.5 823.7,301.3 824.4,298.1 825.1,294.9 825.8,291.6 826.5,288.4 827.3,285.2 828.1,282.0 828.9,278.8 829.7,275.6 830.6,272.3 831.4,269.1 832.3,265.9 833.2,262.7 834.2,259.5 835.1,256.3 836.1,253.1 837.1,249.8 838.1,246.6 839.1,243.4 840.2,240.2 841.3,237.0 842.3,233.8 843.4,230.6 844.6,227.4 845.7,224.2 846.9,221.0 848.0,217.8 849.2,214.6 850.4,211.4 851.6,208.2 852.9,205.0 854.1,201.8 855.4,198.6 856.6,195.4 857.9,192.2 859.2,189.0 860.5,185.8 861.8,182.6 863.2,179.4 864.5,176.3 865.9,173.1 867.2,169.9 868.6,166.7 870.0,163.6 871.4,160.4 872.8,157.3 874.2,154.1 875.6,150.9 877.0,147.8 878.4,144.7 879.9,141.5 881.3,138.4 882.7,135.3 884.2,132.2 885.6,129.1 887.1,126.0 888.5,122.9 890.0,119.8 891.5,116.7 892.9,113.7 894.4,110.6 895.9,107.6 897.3,104.6 898.8,101.6 900.2,98.7 901.7,95.7 903.2,92.8 904.6,89.9 906.1,87.1 907.6,84.3 909.0,81.6 910.5,78.9 912.0,76.3 913.5,73.7 915.0,71.3"/>
<polyline points="939.0,126.7 940.0,130.0 941.0,133.2 942.0,136.5 942.9,139.7 943.9,143.0 944.8,146.3 945.8,149.5 946.7,152.8 947.6,156.0 948.4,159.3 949.3,162.6 950.2,165.8 951.0,169.1 951.8,172.3 952.6,175.6 953.4,178.9 954.2,182.1 955.0,185.4 955.7,188.6 956.5,191.9 957.2,195.2 957.9,198.4 958.6,201.7 959.2,204.9 959.9,208.2 960.5,211.4 961.1,214.7 961.7,218.0 962.3,221.2 962.8,224.5 963.4,227.7 963.9,231.0 964.4,234.3 964.9,237.5 965.3,240.8 965.8,244.0 966.2,247.3 966.6,250.6 967.0,253.8 967.4,257.1 967.7,260.3 968.0,263.6 968.3,266.9 968.6,270.1 968.9,273.4 969.1,276.6 969.3,279.9 969.5,283.2 969.7,286.4 969.9,289.7 970.0,292.9 970.2,296.2 970.3,299.5 970.3,302.7 970.4,306.0 970.4,309.2 970.4,312.5 970.4,315.8 970.4,319.0 970.4,322.3 970.3,325.5 970.2,328.8 970.1,332.1 970.0,335.3 969.8,338.6 969.7,341.8 969.5,345.1 969.3,348.4 969.0,351.6 968.8,354.9 968.5,358.1 968.2,361.4 967.9,364.7 967.6,367.9 967.2,371.2 966.8,374.4 966.5,377.7 966.0,381.0 965.6,384.2 965.2,387.5 964.7,390.7 964.2,394.0 963.7,397.2 963.2,400.5 962.6,403.8 962.1,407.0 961.5,410.3 960.9,413.5 960.3,416.8 959.6,420.1 959.0,423.3 958.3,426.6 957.6,429.8 956.9,433.1 956.2,436.4 955.5,439.6 954.7,442.9 953.9,446.1 953.1,449.4 952.3,452.7 951.5,455.9 950.7,459.2 949.8,462.4 949.0,465.7 948.1,469.0 947.2,472.2 946.3,475.5 945.4,478.7 944.5,482.0"/>
<polyline points="1085.9,87.5 1088.8,89.5 1092.1,91.5 1095.6,93.6 1099.3,95.8 1103.2,98.1 1107.3,100.5 1111.5,102.9 1115.8,105.4 1120.2,107.9 1124.7,110.5 1129.2,113.1 1133.8,115.8 1138.4,118.5 1143.1,121.2 1147.8,124.0 1152.5,126.8 1157.1,129.6 1161.8,132.4 1166.5,135.3 1171.1,138.2 1175.8,141.1 1180.4,144.0 1184.9,146.9 1189.4,149.8 1193.9,152.8 1198.3,155.8 1202.7,158.7 1207.0,161.7 1211.3,164.7 1215.4,167.7 1219.6,170.8 1223.6,173.8 1227.6,176.8 1231.5,179.9 1235.4,182.9 1239.1,186.0 1242.8,189.0 1246.4,192.1 1249.9,195.2 1253.3,198.3 1256.6,201.3 1259.9,204.4 1263.0,207.5 1266.1,210.6 1269.0,213.7 1271.9,216.8 1274.7,219.9 1277.3,223.0 1279.9,226.1 1282.3,229.3 1284.7,232.4 1287.0,235.5 1289.1,238.6 1291.2,241.7 1293.1,244.9 1294.9,248.0 1296.6,251.1 1298.2,254.2 1299.7,257.4 1301.1,260.5 1302.4,263.7 1303.6,266.8 1304.6,269.9 1305.6,273.1 1306.4,276.2 1307.1,279.3 1307.7,282.5 1308.2,285.6 1308.6,288.8 1308.8,291.9 1309.0,295.1 1309.0,298.2 1308.9,301.4 1308.7,304.5 1308.4,307.7 1308.0,310.8 1307.4,313.9 1306.7,317.1 1306.0,320.2 1305.1,323.4 1304.0,326.5 1302.9,329.7 1301.7,332.8 1300.3,336.0 1298.9,339.1 1297.3,342.3 1295.6,345.4 1293.8,348.6 1291.9,351.7 1289.9,354.9 1287.7,358.0 1285.5,361.1 1283.1,364.3 1280.7,367.4 1278.1,370.6 1275.5,373.7 1272.7,376.8 1269.8,380.0 1266.8,383.1 1263.8,386.2"/>
<polyline points="927.0,467.5 928.9,464.7 930.9,461.8 932.8,458.9 934.8,456.0 936.7,453.1 938.7,450.2 940.6,447.3 942.5,444.4 944.4,441.4 946.3,438.5 948.2,435.5 950.1,432.6 952.0,429.6 953.8,426.6 955.7,423.6 957.5,420.6 959.3,417.7 961.1,414.7 962.9,411.7 964.7,408.6 966.5,405.6 968.2,402.6 970.0,399.6 971.7,396.6 973.4,393.6 975.0,390.5 976.7,387.5 978.3,384.5 980.0,381.4 981.6,378.4 983.1,375.3 984.7,372.3 986.2,369.2 987.7,366.2 989.2,363.2 990.7,360.1 992.1,357.0 993.6,354.0 995.0,350.9 996.3,347.9 997.7,344.8 999.0,341.8 1000.3,338.7 1001.6,335.6 1002.8,332.6 1004.0,329.5 1005.2,326.5 1006.4,323.4 1007.5,320.3 1008.6,317.3 1009.7,314.2 1010.7,311.1 1011.7,308.1 1012.7,305.0 1013.7,302.0 1014.6,298.9 1015.5,295.8 1016.4,292.8 1017.2,289.7 1018.0,286.7 1018.8,283.6 1019.5,280.6 1020.2,277.5 1020.9,274.5 1021.6,271.4 1022.2,268.4 1022.8,265.3 1023.3,262.3 1023.9,259.2 1024.3,256.2 1024.8,253.2 1025.2,250.1 1025.6,247.1 1026.0,244.1 1026.3,241.1 1026.6,238.1 1026.9,235.0 1027.1,232.0 1027.4,229.0 1027.5,226.0 1027.7,223.0 1027.8,220.0 1027.9,217.0 1027.9,214.1 1028.0,211.1 1028.0,208.1 1027.9,205.2 1027.9,202.2 1027.8,199.3 1027.7,196.3 1027.6,193.4 1027.4,190.5 1027.2,187.6 1027.0,184.7 1026.7,181.8 1026.5,178.9 1026.2,176.0 1025.9,173.2 1025.6,170.3 1025.2,167.5 1024.9,164.7 1024.5,161.9 1024.1,159.1 1023.7,156.4 1023.3,153.6 1022.9,150.9 1022.5,148.2 1022.0,145.5 1021.6,142.9 1021.2,140.3 1020.7,137.7 1020.3,135.1 1019.9,132.6 1019.5,130.1 1019.2,127.7 1018.8,125.3 1018.5,122.9 1018.2,120.6 1018.0,118.4 1017.8,116.2 1017.7,114.1 1017.6,112.0 1017.6,110.0 1017.7,108.1 1017.9,106.2 1018.2,104.5 1018.7,102.8 1019.2,101.3 1020.0,99.8 1020.8,98.5 1021.9,97.3 1023.2,96.2 1024.7,95.2 1026.4,94.4 1028.4,93.7 1030.6,93.2 1033.2,92.8 1036.0,92.6 1039.1,92.5 1042.5,92.6 1046.3,92.9 1050.4,93.2 1054.8,93.8 1059.5,94.5 1064.5,95.3 1069.9,96.3 1075.5,97.4 1081.4,98.6 1087.6,100.0 1094.1,101.4 1100.8,103.0"/>
<polyline points="946.6,68.1 951.2,71.1 955.8,74.0 960.5,77.0 965.2,80.1 969.9,83.1 974.5,86.2 979.2,89.3 983.9,92.4 988.6,95.6 993.3,98.7 998.0,101.8 1002.6,105.0 1007.2,108.2 1011.8,111.3 1016.4,114.5 1021.0,117.7 1025.5,120.9 1030.0,124.1 1034.4,127.3 1038.9,130.5 1043.3,133.7 1047.6,136.9 1051.9,140.1"/>
</g>
<g fill="none" stroke="#a6a6a6" stroke-width="1.0" stroke-linecap="butt" stroke-linejoin="round">
<polyline points="775.7,240.0 792.7,222.7"/>
<polyline points="826.7,131.0 838.7,132.7"/>
<polyline points="896.7,75.7 904.0,69.0"/>
<polyline points="915.0,71.3 915.8,70.1 916.5,69.0 917.3,67.8 918.1,66.8 919.0,65.7 919.8,64.7 920.6,63.7 921.5,62.8 922.4,62.0 923.4,61.2 924.3,60.4 925.3,59.7 926.4,59.1 927.5,58.6 928.7,58.1 929.9,57.7 931.2,57.4 932.6,57.2 934.1,57.0 935.7,57.0 937.4,57.0 939.1,57.2 941.0,57.4 943.0,57.7 945.1,58.0 947.3,58.5 949.6,59.0 952.1,59.7 954.6,60.3 957.2,61.1 959.9,61.9 962.7,62.7 965.6,63.6 968.6,64.6"/>
<polyline points="936.3,118.0 939.7,126.7"/>
<polyline points="993.3,98.7 1010.0,108.7"/>
<polyline points="1052.5,140.0 1069.7,153.7"/>
<polyline points="1083.3,85.8 1090.8,88.7"/>
<polyline points="1100.8,103.0 1118.0,107.2"/>
</g>
<text x="1489.8" y="330.2" font-size="11.1" fill="#fff" fill-opacity="0.52" text-anchor="middle">+180<tspan dx="3.0" dy="-3.6" font-size="7.5">&#176;</tspan></text>
<text x="1392.0" y="330.2" font-size="11.1" fill="#fff" fill-opacity="0.52" text-anchor="middle">+210<tspan dx="3.0" dy="-3.6" font-size="7.5">&#176;</tspan></text>
<text x="1294.2" y="330.2" font-size="11.1" fill="#fff" fill-opacity="0.52" text-anchor="middle">+240<tspan dx="3.0" dy="-3.6" font-size="7.5">&#176;</tspan></text>
<text x="1196.4" y="330.2" font-size="11.1" fill="#fff" fill-opacity="0.52" text-anchor="middle">+270<tspan dx="3.0" dy="-3.6" font-size="7.5">&#176;</tspan></text>
<text x="1098.6" y="330.2" font-size="11.1" fill="#fff" fill-opacity="0.52" text-anchor="middle">+300<tspan dx="3.0" dy="-3.6" font-size="7.5">&#176;</tspan></text>
<text x="1000.8" y="330.2" font-size="11.1" fill="#fff" fill-opacity="0.52" text-anchor="middle">+330<tspan dx="3.0" dy="-3.6" font-size="7.5">&#176;</tspan></text>
<text x="903.0" y="330.2" font-size="11.1" fill="#fff" fill-opacity="0.52" text-anchor="middle">+0<tspan dx="3.0" dy="-3.6" font-size="7.5">&#176;</tspan></text>
<text x="805.2" y="330.2" font-size="11.1" fill="#fff" fill-opacity="0.52" text-anchor="middle">+30<tspan dx="3.0" dy="-3.6" font-size="7.5">&#176;</tspan></text>
<text x="707.4" y="330.2" font-size="11.1" fill="#fff" fill-opacity="0.52" text-anchor="middle">+60<tspan dx="3.0" dy="-3.6" font-size="7.5">&#176;</tspan></text>
<text x="609.6" y="330.2" font-size="11.1" fill="#fff" fill-opacity="0.52" text-anchor="middle">+90<tspan dx="3.0" dy="-3.6" font-size="7.5">&#176;</tspan></text>
<text x="511.8" y="330.2" font-size="11.1" fill="#fff" fill-opacity="0.52" text-anchor="middle">+120<tspan dx="3.0" dy="-3.6" font-size="7.5">&#176;</tspan></text>
<text x="414.0" y="330.2" font-size="11.1" fill="#fff" fill-opacity="0.52" text-anchor="middle">+150<tspan dx="3.0" dy="-3.6" font-size="7.5">&#176;</tspan></text>
<text x="316.2" y="330.2" font-size="11.1" fill="#fff" fill-opacity="0.52" text-anchor="middle">+180<tspan dx="3.0" dy="-3.6" font-size="7.5">&#176;</tspan></text>
<text x="903.0" y="330.2" font-size="11.1" fill="#fff" fill-opacity="0.52" text-anchor="middle">+0<tspan dx="3.0" dy="-3.6" font-size="7.5">&#176;</tspan></text>
<text x="902.8" y="221.2" font-size="11.1" fill="#fff" fill-opacity="0.52" text-anchor="middle">+30<tspan dx="3.0" dy="-3.6" font-size="7.5">&#176;</tspan></text>
<text x="903.5" y="428.1" font-size="11.1" fill="#fff" fill-opacity="0.52" text-anchor="middle">&#8722;30<tspan dx="3.0" dy="-3.6" font-size="7.5">&#176;</tspan></text>
<text x="902.8" y="123.2" font-size="11.1" fill="#fff" fill-opacity="0.52" text-anchor="middle">+60<tspan dx="3.0" dy="-3.6" font-size="7.5">&#176;</tspan></text>
<text x="903.5" y="526.1" font-size="11.1" fill="#fff" fill-opacity="0.52" text-anchor="middle">&#8722;60<tspan dx="3.0" dy="-3.6" font-size="7.5">&#176;</tspan></text>
<text x="902.8" y="25.3" font-size="11.1" fill="#fff" fill-opacity="0.52" text-anchor="middle">+90<tspan dx="3.0" dy="-3.6" font-size="7.5">&#176;</tspan></text>
<text x="903.5" y="624.0" font-size="11.1" fill="#fff" fill-opacity="0.52" text-anchor="middle">&#8722;90<tspan dx="3.0" dy="-3.6" font-size="7.5">&#176;</tspan></text>
<text class="mono" x="315" y="29.80" font-size="13.94" fill="#fff" xml:space="preserve">USL01C</text>
<text class="mono" x="315" y="42.80" font-size="13.94" fill="#fff" xml:space="preserve">Beg: 20251013 02:16:41 (sol = 199.65&#176;)</text>
<text class="mono" x="315" y="56.60" font-size="13.94" fill="#fff" xml:space="preserve">End: 20251013 04:45:19 (sol = 199.75&#176;)</text>
<text class="mono" x="315" y="69.20" font-size="13.94" fill="#fff" xml:space="preserve">--------------------------------------</text>
<text class="mono" x="315" y="81.80" font-size="13.94" fill="#fff" xml:space="preserve">...: 9</text>
<clipPath id="axclip"><rect x="19.5" y="641.5" width="1766.0" height="201.0"/></clipPath>
<g clip-path="url(#axclip)">
<text transform="translate(149.00,642.79) rotate(-90)" font-size="30.50" fill="#525252" text-anchor="end" text-rendering="geometricPrecision" textLength="53.67" lengthAdjust="spacingAndGlyphs">APR</text>
<text transform="translate(294.00,644.99) rotate(-90)" font-size="30.50" fill="#525252" text-anchor="end" text-rendering="geometricPrecision" textLength="56.23" lengthAdjust="spacingAndGlyphs">MAY</text>
<text transform="translate(436.00,640.73) rotate(-90)" font-size="30.50" fill="#525252" text-anchor="end" text-rendering="geometricPrecision" textLength="53.88" lengthAdjust="spacingAndGlyphs">JUN</text>
<text transform="translate(576.00,641.40) rotate(-90)" font-size="30.50" fill="#525252" text-anchor="end" text-rendering="geometricPrecision" textLength="48.11" lengthAdjust="spacingAndGlyphs">JUL</text>
<text transform="translate(723.00,642.50) rotate(-90)" font-size="30.50" fill="#525252" text-anchor="end" text-rendering="geometricPrecision" textLength="60.97" lengthAdjust="spacingAndGlyphs">AUG</text>
<text transform="translate(872.00,644.35) rotate(-90)" font-size="30.50" fill="#525252" text-anchor="end" text-rendering="geometricPrecision" textLength="49.16" lengthAdjust="spacingAndGlyphs">SEP</text>
<text transform="translate(1016.10,643.36) rotate(-90)" font-size="30.50" fill="#525252" text-anchor="end" text-rendering="geometricPrecision" textLength="57.53" lengthAdjust="spacingAndGlyphs">OCT</text>
<text transform="translate(1168.90,645.28) rotate(-90)" font-size="30.50" fill="#525252" text-anchor="end" text-rendering="geometricPrecision" textLength="59.38" lengthAdjust="spacingAndGlyphs">NOV</text>
<text transform="translate(1318.30,644.84) rotate(-90)" font-size="30.50" fill="#525252" text-anchor="end" text-rendering="geometricPrecision" textLength="55.74" lengthAdjust="spacingAndGlyphs">DEC</text>
<text transform="translate(1468.90,640.62) rotate(-90)" font-size="30.50" fill="#525252" text-anchor="end" text-rendering="geometricPrecision" textLength="52.80" lengthAdjust="spacingAndGlyphs">JAN</text>
<text transform="translate(1628.00,645.54) rotate(-90)" font-size="30.50" fill="#525252" text-anchor="end" text-rendering="geometricPrecision" textLength="50.61" lengthAdjust="spacingAndGlyphs">FEB</text>
<text transform="translate(1766.10,644.71) rotate(-90)" font-size="30.50" fill="#525252" text-anchor="end" text-rendering="geometricPrecision" textLength="60.75" lengthAdjust="spacingAndGlyphs">MAR</text>
</g>
<g fill="none" stroke-width="4"><line x1="106.0" y1="834.00" x2="129.0" y2="834.00" stroke="#bddf26"/><line x1="165.0" y1="834.00" x2="345.0" y2="834.00" stroke="#bddf26"/><line x1="366.0" y1="834.00" x2="625.0" y2="834.00" stroke="#bddf26"/><line x1="635.0" y1="834.00" x2="786.0" y2="834.00" stroke="#bddf26"/><line x1="807.0" y1="834.00" x2="899.0" y2="834.00" stroke="#bddf26"/><line x1="920.0" y1="834.00" x2="973.0" y2="834.00" stroke="#bddf26"/><line x1="984.0" y1="834.00" x2="1066.0" y2="834.00" stroke="#bddf26"/><line x1="1082.0" y1="834.00" x2="1203.0" y2="834.00" stroke="#bddf26"/><line x1="1244.0" y1="834.00" x2="1326.0" y2="834.00" stroke="#bddf26"/><line x1="1337.0" y1="834.00" x2="1355.0" y2="834.00" stroke="#bddf26"/><line x1="1381.0" y1="834.00" x2="1444.0" y2="834.00" stroke="#bddf26"/><line x1="1459.0" y1="834.00" x2="1512.0" y2="834.00" stroke="#bddf26"/><line x1="1523.0" y1="834.00" x2="1547.0" y2="834.00" stroke="#bddf26"/><line x1="1724.0" y1="834.00" x2="1748.0" y2="834.00" stroke="#bddf26"/><line x1="1758.0" y1="834.00" x2="1782.0" y2="834.00" stroke="#bddf26"/><line x1="165.0" y1="818.00" x2="188.0" y2="818.00" stroke="#81d34c"/><line x1="223.0" y1="818.00" x2="286.0" y2="818.00" stroke="#81d34c"/><line x1="312.0" y1="818.00" x2="340.0" y2="818.00" stroke="#81d34c"/><line x1="366.0" y1="818.00" x2="492.0" y2="818.00" stroke="#81d34c"/><line x1="508.0" y1="818.00" x2="654.0" y2="818.00" stroke="#81d34c"/><line x1="704.0" y1="818.00" x2="737.0" y2="818.00" stroke="#81d34c"/><line x1="773.0" y1="818.00" x2="845.0" y2="818.00" stroke="#81d34c"/><line x1="871.0" y1="818.00" x2="988.0" y2="818.00" stroke="#81d34c"/><line x1="1003.0" y1="818.00" x2="1017.0" y2="818.00" stroke="#81d34c"/><line x1="1062.0" y1="818.00" x2="1213.0" y2="818.00" stroke="#81d34c"/><line x1="1244.0" y1="818.00" x2="1267.0" y2="818.00" stroke="#81d34c"/><line x1="1293.0" y1="818.00" x2="1316.0" y2="818.00" stroke="#81d34c"/><line x1="1342.0" y1="818.00" x2="1365.0" y2="818.00" stroke="#81d34c"/><line x1="1386.0" y1="818.00" x2="1429.0" y2="818.00" stroke="#81d34c"/><line x1="1459.0" y1="818.00" x2="1483.0" y2="818.00" stroke="#81d34c"/><line x1="1548.0" y1="818.00" x2="1571.0" y2="818.00" stroke="#81d34c"/><line x1="165.0" y1="802.00" x2="188.0" y2="802.00" stroke="#50c369"/><line x1="258.0" y1="802.00" x2="487.0" y2="802.00" stroke="#50c369"/><line x1="508.0" y1="802.00" x2="615.0" y2="802.00" stroke="#50c369"/><line x1="626.0" y1="802.00" x2="718.0" y2="802.00" stroke="#50c369"/><line x1="729.0" y1="802.00" x2="826.0" y2="802.00" stroke="#50c369"/><line x1="949.0" y1="802.00" x2="1149.0" y2="802.00" stroke="#50c369"/><line x1="1160.0" y1="802.00" x2="1248.0" y2="802.00" stroke="#50c369"/><line x1="1258.0" y1="802.00" x2="1444.0" y2="802.00" stroke="#50c369"/><line x1="1459.0" y1="802.00" x2="1483.0" y2="802.00" stroke="#50c369"/><line x1="1552.0" y1="802.00" x2="1576.0" y2="802.00" stroke="#50c369"/><line x1="194.0" y1="785.00" x2="218.0" y2="785.00" stroke="#2eb07d"/><line x1="321.0" y1="785.00" x2="507.0" y2="785.00" stroke="#2eb07d"/><line x1="518.0" y1="785.00" x2="541.0" y2="785.00" stroke="#2eb07d"/><line x1="557.0" y1="785.00" x2="683.0" y2="785.00" stroke="#2eb07d"/><line x1="807.0" y1="785.00" x2="831.0" y2="785.00" stroke="#2eb07d"/><line x1="954.0" y1="785.00" x2="973.0" y2="785.00" stroke="#2eb07d"/><line x1="988.0" y1="785.00" x2="1125.0" y2="785.00" stroke="#2eb07d"/><line x1="1155.0" y1="785.00" x2="1218.0" y2="785.00" stroke="#2eb07d"/><line x1="1244.0" y1="785.00" x2="1267.0" y2="785.00" stroke="#2eb07d"/><line x1="1317.0" y1="785.00" x2="1341.0" y2="785.00" stroke="#2eb07d"/><line x1="1396.0" y1="785.00" x2="1419.0" y2="785.00" stroke="#2eb07d"/><line x1="1464.0" y1="785.00" x2="1650.0" y2="785.00" stroke="#2eb07d"/><line x1="341.0" y1="769.00" x2="370.0" y2="769.00" stroke="#219b89"/><line x1="410.0" y1="769.00" x2="448.0" y2="769.00" stroke="#219b89"/><line x1="469.0" y1="769.00" x2="492.0" y2="769.00" stroke="#219b89"/><line x1="527.0" y1="769.00" x2="546.0" y2="769.00" stroke="#219b89"/><line x1="562.0" y1="769.00" x2="590.0" y2="769.00" stroke="#219b89"/><line x1="616.0" y1="769.00" x2="649.0" y2="769.00" stroke="#219b89"/><line x1="959.0" y1="769.00" x2="988.0" y2="769.00" stroke="#219b89"/><line x1="1062.0" y1="769.00" x2="1086.0" y2="769.00" stroke="#219b89"/><line x1="1101.0" y1="769.00" x2="1125.0" y2="769.00" stroke="#219b89"/><line x1="1160.0" y1="769.00" x2="1194.0" y2="769.00" stroke="#219b89"/><line x1="1248.0" y1="769.00" x2="1272.0" y2="769.00" stroke="#219b89"/><line x1="1425.0" y1="769.00" x2="1512.0" y2="769.00" stroke="#219b89"/><line x1="420.0" y1="752.00" x2="443.0" y2="752.00" stroke="#25868d"/><line x1="532.0" y1="752.00" x2="556.0" y2="752.00" stroke="#25868d"/><line x1="567.0" y1="752.00" x2="590.0" y2="752.00" stroke="#25868d"/><line x1="621.0" y1="752.00" x2="742.0" y2="752.00" stroke="#25868d"/><line x1="969.0" y1="752.00" x2="1135.0" y2="752.00" stroke="#25868d"/><line x1="1185.0" y1="752.00" x2="1346.0" y2="752.00" stroke="#25868d"/><line x1="1469.0" y1="752.00" x2="1493.0" y2="752.00" stroke="#25868d"/><line x1="429.0" y1="736.00" x2="453.0" y2="736.00" stroke="#2d708e"/><line x1="576.0" y1="736.00" x2="733.0" y2="736.00" stroke="#2d708e"/><line x1="993.0" y1="736.00" x2="1105.0" y2="736.00" stroke="#2d708e"/><line x1="1116.0" y1="736.00" x2="1223.0" y2="736.00" stroke="#2d708e"/><line x1="1263.0" y1="736.00" x2="1292.0" y2="736.00" stroke="#2d708e"/><line x1="1489.0" y1="736.00" x2="1512.0" y2="736.00" stroke="#2d708e"/><line x1="591.0" y1="720.00" x2="615.0" y2="720.00" stroke="#37598c"/><line x1="655.0" y1="720.00" x2="772.0" y2="720.00" stroke="#37598c"/><line x1="1072.0" y1="720.00" x2="1243.0" y2="720.00" stroke="#37598c"/><line x1="1263.0" y1="720.00" x2="1287.0" y2="720.00" stroke="#37598c"/><line x1="596.0" y1="703.00" x2="733.0" y2="703.00" stroke="#424085"/><line x1="1091.0" y1="703.00" x2="1120.0" y2="703.00" stroke="#424085"/><line x1="1199.0" y1="703.00" x2="1223.0" y2="703.00" stroke="#424085"/><line x1="1273.0" y1="703.00" x2="1326.0" y2="703.00" stroke="#424085"/><line x1="1111.0" y1="687.00" x2="1135.0" y2="687.00" stroke="#482475"/></g>
<g fill="none" stroke="#fff" stroke-opacity="0.36" stroke-width="2.083" stroke-dasharray="2.083 3.4375">
<line x1="74" y1="842.5" x2="74" y2="641.5"/>
<line x1="218" y1="842.5" x2="218" y2="641.5"/>
<line x1="365" y1="842.5" x2="365" y2="641.5"/>
<line x1="505" y1="842.5" x2="505" y2="641.5"/>
<line x1="650" y1="842.5" x2="650" y2="641.5"/>
<line x1="797" y1="842.5" x2="797" y2="641.5"/>
<line x1="940" y1="842.5" x2="940" y2="641.5"/>
<line x1="1091" y1="842.5" x2="1091" y2="641.5"/>
<line x1="1239" y1="842.5" x2="1239" y2="641.5"/>
<line x1="1394" y1="842.5" x2="1394" y2="641.5"/>
<line x1="1548" y1="842.5" x2="1548" y2="641.5"/>
<line x1="1687" y1="842.5" x2="1687" y2="641.5"/>
</g>
<g><text x="117.50" y="831.60" font-size="11.78" fill="#fff" text-anchor="middle" textLength="20.40" lengthAdjust="spacingAndGlyphs">KSE</text><text x="255.00" y="831.60" font-size="11.78" fill="#fff" text-anchor="middle" textLength="19.62" lengthAdjust="spacingAndGlyphs">ETA</text><text x="495.50" y="831.60" font-size="11.78" fill="#fff" text-anchor="middle" textLength="22.61" lengthAdjust="spacingAndGlyphs">NZC</text><text x="710.50" y="831.60" font-size="11.78" fill="#fff" text-anchor="middle" textLength="23.18" lengthAdjust="spacingAndGlyphs">NDA</text><text x="853.00" y="831.60" font-size="11.78" fill="#fff" text-anchor="middle" textLength="19.84" lengthAdjust="spacingAndGlyphs">SPE</text><text x="946.50" y="831.60" font-size="11.78" fill="#fff" text-anchor="middle" textLength="22.80" lengthAdjust="spacingAndGlyphs">ARD</text><text x="1025.00" y="831.60" font-size="11.78" fill="#fff" text-anchor="middle" textLength="21.63" lengthAdjust="spacingAndGlyphs">EGE</text><text x="1142.50" y="831.60" font-size="11.78" fill="#fff" text-anchor="middle" textLength="20.85" lengthAdjust="spacingAndGlyphs">NTA</text><text x="1284.20" y="831.60" font-size="11.78" fill="#fff" text-anchor="middle" textLength="25.44" lengthAdjust="spacingAndGlyphs">MON</text><text x="1343.50" y="831.60" font-size="11.78" fill="#fff" text-anchor="middle" textLength="21.87" lengthAdjust="spacingAndGlyphs">URS</text><text x="1412.50" y="831.60" font-size="11.78" fill="#fff" text-anchor="middle" textLength="21.72" lengthAdjust="spacingAndGlyphs">AHY</text><text x="1485.50" y="831.60" font-size="11.78" fill="#fff" text-anchor="middle" textLength="25.14" lengthAdjust="spacingAndGlyphs">GUM</text><text x="1535.00" y="831.60" font-size="11.78" fill="#fff" text-anchor="middle" textLength="22.81" lengthAdjust="spacingAndGlyphs">OHY</text><text x="1736.00" y="831.60" font-size="11.78" fill="#fff" text-anchor="middle" textLength="21.95" lengthAdjust="spacingAndGlyphs">XHE</text><text x="1770.00" y="831.60" font-size="11.78" fill="#fff" text-anchor="middle" textLength="17.09" lengthAdjust="spacingAndGlyphs">EVI</text><text x="176.50" y="814.80" font-size="11.78" fill="#fff" text-anchor="middle" textLength="21.12" lengthAdjust="spacingAndGlyphs">AVB</text><text x="254.50" y="814.80" font-size="11.78" fill="#fff" text-anchor="middle" textLength="17.69" lengthAdjust="spacingAndGlyphs">ELY</text><text x="323.80" y="814.80" font-size="11.78" fill="#fff" text-anchor="middle" textLength="23.82" lengthAdjust="spacingAndGlyphs">CAM</text><text x="431.80" y="814.80" font-size="11.78" fill="#fff" text-anchor="middle" textLength="21.69" lengthAdjust="spacingAndGlyphs">SSG</text><text x="578.50" y="814.80" font-size="11.78" fill="#fff" text-anchor="middle" textLength="21.06" lengthAdjust="spacingAndGlyphs">PCA</text><text x="720.50" y="814.80" font-size="11.78" fill="#fff" text-anchor="middle" textLength="23.19" lengthAdjust="spacingAndGlyphs">AUD</text><text x="809.00" y="814.80" font-size="11.78" fill="#fff" text-anchor="middle" textLength="22.40" lengthAdjust="spacingAndGlyphs">AUR</text><text x="931.30" y="814.80" font-size="11.78" fill="#fff" text-anchor="middle" textLength="22.17" lengthAdjust="spacingAndGlyphs">DSX</text><text x="1010.00" y="814.80" font-size="11.78" fill="#fff" text-anchor="middle" textLength="23.53" lengthAdjust="spacingAndGlyphs">OCU</text><text x="1137.50" y="814.80" font-size="11.78" fill="#fff" text-anchor="middle" textLength="22.43" lengthAdjust="spacingAndGlyphs">OER</text><text x="1255.50" y="814.80" font-size="11.78" fill="#fff" text-anchor="middle" textLength="23.30" lengthAdjust="spacingAndGlyphs">DKD</text><text x="1304.50" y="814.80" font-size="11.78" fill="#fff" text-anchor="middle" textLength="22.16" lengthAdjust="spacingAndGlyphs">DSV</text><text x="1353.50" y="814.80" font-size="11.78" fill="#fff" text-anchor="middle" textLength="18.24" lengthAdjust="spacingAndGlyphs">ALY</text><text x="1407.50" y="814.80" font-size="11.78" fill="#fff" text-anchor="middle" textLength="15.74" lengthAdjust="spacingAndGlyphs">JLE</text><text x="1471.00" y="814.80" font-size="11.78" fill="#fff" text-anchor="middle" textLength="21.55" lengthAdjust="spacingAndGlyphs">SCC</text><text x="1559.50" y="814.80" font-size="11.78" fill="#fff" text-anchor="middle" textLength="20.06" lengthAdjust="spacingAndGlyphs">FEV</text><text x="176.50" y="798.80" font-size="11.78" fill="#fff" text-anchor="middle" textLength="18.36" lengthAdjust="spacingAndGlyphs">LYR</text><text x="372.50" y="798.80" font-size="11.78" fill="#fff" text-anchor="middle" textLength="19.69" lengthAdjust="spacingAndGlyphs">JMC</text><text x="558.70" y="798.80" font-size="11.78" fill="#fff" text-anchor="middle" textLength="16.23" lengthAdjust="spacingAndGlyphs">JPE</text><text x="672.00" y="798.80" font-size="11.78" fill="#fff" text-anchor="middle" textLength="20.74" lengthAdjust="spacingAndGlyphs">PAU</text><text x="774.30" y="798.80" font-size="11.78" fill="#fff" text-anchor="middle" textLength="18.32" lengthAdjust="spacingAndGlyphs">NIA</text><text x="1049.00" y="798.80" font-size="11.78" fill="#fff" text-anchor="middle" textLength="19.65" lengthAdjust="spacingAndGlyphs">STA</text><text x="1205.00" y="798.80" font-size="11.78" fill="#fff" text-anchor="middle" textLength="24.64" lengthAdjust="spacingAndGlyphs">NOO</text><text x="1353.50" y="798.80" font-size="11.78" fill="#fff" text-anchor="middle" textLength="24.91" lengthAdjust="spacingAndGlyphs">COM</text><text x="1471.00" y="798.80" font-size="11.78" fill="#fff" text-anchor="middle" textLength="22.75" lengthAdjust="spacingAndGlyphs">NCC</text><text x="1564.00" y="798.80" font-size="11.78" fill="#fff" text-anchor="middle" textLength="20.98" lengthAdjust="spacingAndGlyphs">FED</text><text x="206.00" y="782.90" font-size="11.78" fill="#fff" text-anchor="middle" textLength="18.37" lengthAdjust="spacingAndGlyphs">HVI</text><text x="411.80" y="782.90" font-size="11.78" fill="#fff" text-anchor="middle" textLength="17.76" lengthAdjust="spacingAndGlyphs">ARI</text><text x="529.50" y="782.90" font-size="11.78" fill="#fff" text-anchor="middle" textLength="21.41" lengthAdjust="spacingAndGlyphs">SZC</text><text x="617.80" y="782.90" font-size="11.78" fill="#fff" text-anchor="middle" textLength="21.06" lengthAdjust="spacingAndGlyphs">CAP</text><text x="819.00" y="782.90" font-size="11.78" fill="#fff" text-anchor="middle" textLength="22.41" lengthAdjust="spacingAndGlyphs">NUE</text><text x="961.70" y="782.90" font-size="11.78" fill="#fff" text-anchor="middle" textLength="22.24" lengthAdjust="spacingAndGlyphs">OCT</text><text x="1059.50" y="782.90" font-size="11.78" fill="#fff" text-anchor="middle" textLength="18.85" lengthAdjust="spacingAndGlyphs">ORI</text><text x="1186.50" y="782.90" font-size="11.78" fill="#fff" text-anchor="middle" textLength="24.76" lengthAdjust="spacingAndGlyphs">AMO</text><text x="1255.50" y="782.90" font-size="11.78" fill="#fff" text-anchor="middle" textLength="21.98" lengthAdjust="spacingAndGlyphs">DPC</text><text x="1329.00" y="782.90" font-size="11.78" fill="#fff" text-anchor="middle" textLength="17.66" lengthAdjust="spacingAndGlyphs">XVI</text><text x="1407.50" y="782.90" font-size="11.78" fill="#fff" text-anchor="middle" textLength="23.38" lengthAdjust="spacingAndGlyphs">QUA</text><text x="1559.50" y="782.90" font-size="11.78" fill="#fff" text-anchor="middle" textLength="22.75" lengthAdjust="spacingAndGlyphs">AAN</text><text x="352.50" y="765.90" font-size="11.78" fill="#fff" text-anchor="middle" textLength="20.89" lengthAdjust="spacingAndGlyphs">TAH</text><text x="431.50" y="765.90" font-size="11.78" fill="#fff" text-anchor="middle" textLength="17.09" lengthAdjust="spacingAndGlyphs">JEA</text><text x="480.50" y="765.90" font-size="11.78" fill="#fff" text-anchor="middle" textLength="12.66" lengthAdjust="spacingAndGlyphs">JIP</text><text x="538.50" y="765.90" font-size="11.78" fill="#fff" text-anchor="middle" textLength="19.53" lengthAdjust="spacingAndGlyphs">PPS</text><text x="578.50" y="765.90" font-size="11.78" fill="#fff" text-anchor="middle" textLength="21.41" lengthAdjust="spacingAndGlyphs">ZCS</text><text x="632.50" y="765.90" font-size="11.78" fill="#fff" text-anchor="middle" textLength="23.76" lengthAdjust="spacingAndGlyphs">GDR</text><text x="971.00" y="765.90" font-size="11.78" fill="#fff" text-anchor="middle" textLength="22.37" lengthAdjust="spacingAndGlyphs">DRA</text><text x="1074.00" y="765.90" font-size="11.78" fill="#fff" text-anchor="middle" textLength="22.30" lengthAdjust="spacingAndGlyphs">LUM</text><text x="1113.00" y="765.90" font-size="11.78" fill="#fff" text-anchor="middle" textLength="21.54" lengthAdjust="spacingAndGlyphs">RPU</text><text x="1176.25" y="765.90" font-size="11.78" fill="#fff" text-anchor="middle" textLength="21.72" lengthAdjust="spacingAndGlyphs">THA</text><text x="1260.00" y="765.90" font-size="11.78" fill="#fff" text-anchor="middle" textLength="20.90" lengthAdjust="spacingAndGlyphs">PSU</text><text x="1470.70" y="765.90" font-size="11.78" fill="#fff" text-anchor="middle" textLength="21.18" lengthAdjust="spacingAndGlyphs">XCB</text><text x="431.50" y="749.60" font-size="11.78" fill="#fff" text-anchor="middle" textLength="17.38" lengthAdjust="spacingAndGlyphs">JRC</text><text x="544.00" y="749.60" font-size="11.78" fill="#fff" text-anchor="middle" textLength="22.60" lengthAdjust="spacingAndGlyphs">CAN</text><text x="578.50" y="749.60" font-size="11.78" fill="#fff" text-anchor="middle" textLength="20.32" lengthAdjust="spacingAndGlyphs">FAN</text><text x="681.50" y="749.60" font-size="11.78" fill="#fff" text-anchor="middle" textLength="20.47" lengthAdjust="spacingAndGlyphs">PER</text><text x="1049.50" y="749.60" font-size="11.78" fill="#fff" text-anchor="middle" textLength="20.32" lengthAdjust="spacingAndGlyphs">CTA</text><text x="1264.00" y="749.60" font-size="11.78" fill="#fff" text-anchor="middle" textLength="22.63" lengthAdjust="spacingAndGlyphs">HYD</text><text x="1481.00" y="749.60" font-size="11.78" fill="#fff" text-anchor="middle" textLength="24.19" lengthAdjust="spacingAndGlyphs">XUM</text><text x="441.00" y="733.10" font-size="11.78" fill="#fff" text-anchor="middle" textLength="23.13" lengthAdjust="spacingAndGlyphs">COR</text><text x="657.00" y="733.10" font-size="11.78" fill="#fff" text-anchor="middle" textLength="21.98" lengthAdjust="spacingAndGlyphs">SDA</text><text x="1049.00" y="733.10" font-size="11.78" fill="#fff" text-anchor="middle" textLength="18.19" lengthAdjust="spacingAndGlyphs">LMI</text><text x="1166.50" y="733.10" font-size="11.78" fill="#fff" text-anchor="middle" textLength="20.97" lengthAdjust="spacingAndGlyphs">LEO</text><text x="1275.00" y="733.10" font-size="11.78" fill="#fff" text-anchor="middle" textLength="21.16" lengthAdjust="spacingAndGlyphs">EHY</text><text x="1500.50" y="733.10" font-size="11.78" fill="#fff" text-anchor="middle" textLength="21.37" lengthAdjust="spacingAndGlyphs">ECV</text><text x="603.00" y="716.90" font-size="11.78" fill="#fff" text-anchor="middle" textLength="17.66" lengthAdjust="spacingAndGlyphs">JXA</text><text x="714.80" y="716.90" font-size="11.78" fill="#fff" text-anchor="middle" textLength="22.01" lengthAdjust="spacingAndGlyphs">KCG</text><text x="1157.50" y="716.90" font-size="11.78" fill="#fff" text-anchor="middle" textLength="23.36" lengthAdjust="spacingAndGlyphs">AND</text><text x="1275.00" y="716.90" font-size="11.78" fill="#fff" text-anchor="middle" textLength="23.41" lengthAdjust="spacingAndGlyphs">DAD</text><text x="666.50" y="700.90" font-size="11.78" fill="#fff" text-anchor="middle" textLength="17.21" lengthAdjust="spacingAndGlyphs">ERI</text><text x="1108.30" y="700.90" font-size="11.78" fill="#fff" text-anchor="middle" textLength="20.82" lengthAdjust="spacingAndGlyphs">SLD</text><text x="1211.00" y="700.90" font-size="11.78" fill="#fff" text-anchor="middle" textLength="22.46" lengthAdjust="spacingAndGlyphs">ORS</text><text x="1299.50" y="700.90" font-size="11.78" fill="#fff" text-anchor="middle" textLength="24.08" lengthAdjust="spacingAndGlyphs">GEM</text><text x="1123.00" y="683.90" font-size="11.78" fill="#fff" text-anchor="middle" textLength="23.59" lengthAdjust="spacingAndGlyphs">KUM</text></g>
<path d="M112.83 834.00H121.17M117.00 829.83V838.17M240.83 834.00H249.17M245.00 829.83V838.17M510.33 834.00H518.67M514.50 829.83V838.17M706.33 834.00H714.67M710.50 829.83V838.17M832.83 834.00H841.17M837.00 829.83V838.17M961.83 834.00H970.17M966.00 829.83V838.17M985.83 834.00H994.17M990.00 829.83V838.17M1115.83 834.00H1124.17M1120.00 829.83V838.17M1294.83 834.00H1303.17M1299.00 829.83V838.17M1341.83 834.00H1350.17M1346.00 829.83V838.17M1412.83 834.00H1421.17M1417.00 829.83V838.17M1481.83 834.00H1490.17M1486.00 829.83V838.17M1530.83 834.00H1539.17M1535.00 829.83V838.17M1731.83 834.00H1740.17M1736.00 829.83V838.17M1765.83 834.00H1774.17M1770.00 829.83V838.17M171.83 818.00H180.17M176.00 813.83V822.17M255.83 818.00H264.17M260.00 813.83V822.17M322.83 818.00H331.17M327.00 813.83V822.17M436.83 818.00H445.17M441.00 813.83V822.17M598.83 818.00H607.17M603.00 813.83V822.17M716.83 818.00H725.17M721.00 813.83V822.17M792.83 818.00H801.17M797.00 813.83V822.17M938.83 818.00H947.17M943.00 813.83V822.17M1005.83 818.00H1014.17M1010.00 813.83V822.17M1152.83 818.00H1161.17M1157.00 813.83V822.17M1250.83 818.00H1259.17M1255.00 813.83V822.17M1299.83 818.00H1308.17M1304.00 813.83V822.17M1348.83 818.00H1357.17M1353.00 813.83V822.17M1402.83 818.00H1411.17M1407.00 813.83V822.17M1466.83 818.00H1475.17M1471.00 813.83V822.17M1554.83 818.00H1563.17M1559.00 813.83V822.17M173.83 802.00H182.17M178.00 797.83V806.17M377.33 802.00H385.67M381.50 797.83V806.17M544.83 802.00H553.17M549.00 797.83V806.17M681.83 802.00H690.17M686.00 797.83V806.17M740.83 802.00H749.17M745.00 797.83V806.17M1074.83 802.00H1083.17M1079.00 797.83V806.17M1216.83 802.00H1225.17M1221.00 797.83V806.17M1304.33 802.00H1312.67M1308.50 797.83V806.17M1466.83 802.00H1475.17M1471.00 797.83V806.17M1559.83 802.00H1568.17M1564.00 797.83V806.17M201.33 785.00H209.67M205.50 780.83V789.17M399.33 785.00H407.67M403.50 780.83V789.17M524.83 785.00H533.17M529.00 780.83V789.17M638.83 785.00H647.17M643.00 780.83V789.17M814.83 785.00H823.17M819.00 780.83V789.17M958.83 785.00H967.17M963.00 780.83V789.17M1039.83 785.00H1048.17M1044.00 780.83V789.17M1187.83 785.00H1196.17M1192.00 780.83V789.17M1250.83 785.00H1259.17M1255.00 780.83V789.17M1324.83 785.00H1333.17M1329.00 780.83V789.17M1402.83 785.00H1411.17M1407.00 780.83V789.17M1545.33 785.00H1553.67M1549.50 780.83V789.17M355.33 769.00H363.67M359.50 764.83V773.17M425.83 769.00H434.17M430.00 764.83V773.17M475.83 769.00H484.17M480.00 764.83V773.17M534.83 769.00H543.17M539.00 764.83V773.17M570.83 769.00H579.17M575.00 764.83V773.17M630.33 769.00H638.67M634.50 764.83V773.17M973.83 769.00H982.17M978.00 764.83V773.17M1069.83 769.00H1078.17M1074.00 764.83V773.17M1108.83 769.00H1117.17M1113.00 764.83V773.17M1177.83 769.00H1186.17M1182.00 764.83V773.17M1255.33 769.00H1263.67M1259.50 764.83V773.17M1466.83 769.00H1475.17M1471.00 764.83V773.17M426.33 752.00H434.67M430.50 747.83V756.17M539.33 752.00H547.67M543.50 747.83V756.17M573.83 752.00H582.17M578.00 747.83V756.17M703.83 752.00H712.17M708.00 747.83V756.17M1093.33 752.00H1101.67M1097.50 747.83V756.17M1270.83 752.00H1279.17M1275.00 747.83V756.17M1476.83 752.00H1485.17M1481.00 747.83V756.17M436.83 736.00H445.17M441.00 731.83V740.17M630.33 736.00H638.67M634.50 731.83V740.17M1038.83 736.00H1047.17M1043.00 731.83V740.17M1167.83 736.00H1176.17M1172.00 731.83V740.17M1274.83 736.00H1283.17M1279.00 731.83V740.17M1496.83 736.00H1505.17M1501.00 731.83V740.17M598.83 720.00H607.17M603.00 715.83V724.17M726.83 720.00H735.17M731.00 715.83V724.17M1187.83 720.00H1196.17M1192.00 715.83V724.17M1270.83 720.00H1279.17M1275.00 715.83V724.17M686.33 703.00H694.67M690.50 698.83V707.17M1101.83 703.00H1110.17M1106.00 698.83V707.17M1206.83 703.00H1215.17M1211.00 698.83V707.17M1299.83 703.00H1308.17M1304.00 698.83V707.17M1118.83 687.00H1127.17M1123.00 682.83V691.17" fill="none" stroke="#fff" stroke-width="2.08"/>
<line x1="999.55" y1="842.5" x2="999.55" y2="641.5" stroke="#ff0000" stroke-width="1.55" stroke-dasharray="5.14 2.22"/>
<rect x="19.5" y="641.5" width="1766.0" height="201.0" fill="none" stroke="#fff" stroke-width="1"/>
<text x="19.20" y="861.90" font-size="14.72" fill="#fff" text-anchor="middle" textLength="8.13" lengthAdjust="spacingAndGlyphs">0</text>
<text x="264.48" y="861.90" font-size="14.72" fill="#fff" text-anchor="middle" textLength="16.26" lengthAdjust="spacingAndGlyphs">50</text>
<text x="509.76" y="861.90" font-size="14.72" fill="#fff" text-anchor="middle" textLength="24.39" lengthAdjust="spacingAndGlyphs">100</text>
<text x="755.03" y="861.90" font-size="14.72" fill="#fff" text-anchor="middle" textLength="24.39" lengthAdjust="spacingAndGlyphs">150</text>
<text x="1000.31" y="861.90" font-size="14.72" fill="#fff" text-anchor="middle" textLength="24.39" lengthAdjust="spacingAndGlyphs">200</text>
<text x="1245.59" y="861.90" font-size="14.72" fill="#fff" text-anchor="middle" textLength="24.39" lengthAdjust="spacingAndGlyphs">250</text>
<text x="1490.87" y="861.90" font-size="14.72" fill="#fff" text-anchor="middle" textLength="24.39" lengthAdjust="spacingAndGlyphs">300</text>
<text x="1736.14" y="861.90" font-size="14.72" fill="#fff" text-anchor="middle" textLength="24.39" lengthAdjust="spacingAndGlyphs">350</text>
<path d="M19.50 842.5V847.80M265.50 842.5V847.80M510.50 842.5V847.80M755.50 842.5V847.80M1000.50 842.5V847.80M1246.50 842.5V847.80M1491.50 842.5V847.80M1736.50 842.5V847.80" fill="none" stroke="#fff" stroke-width="1.11"/>
<text x="902.40" y="882.00" font-size="14.72" fill="#fff" text-anchor="middle" textLength="146.69" lengthAdjust="spacingAndGlyphs">Solar longitude (deg)</text>
</svg></body></html>
